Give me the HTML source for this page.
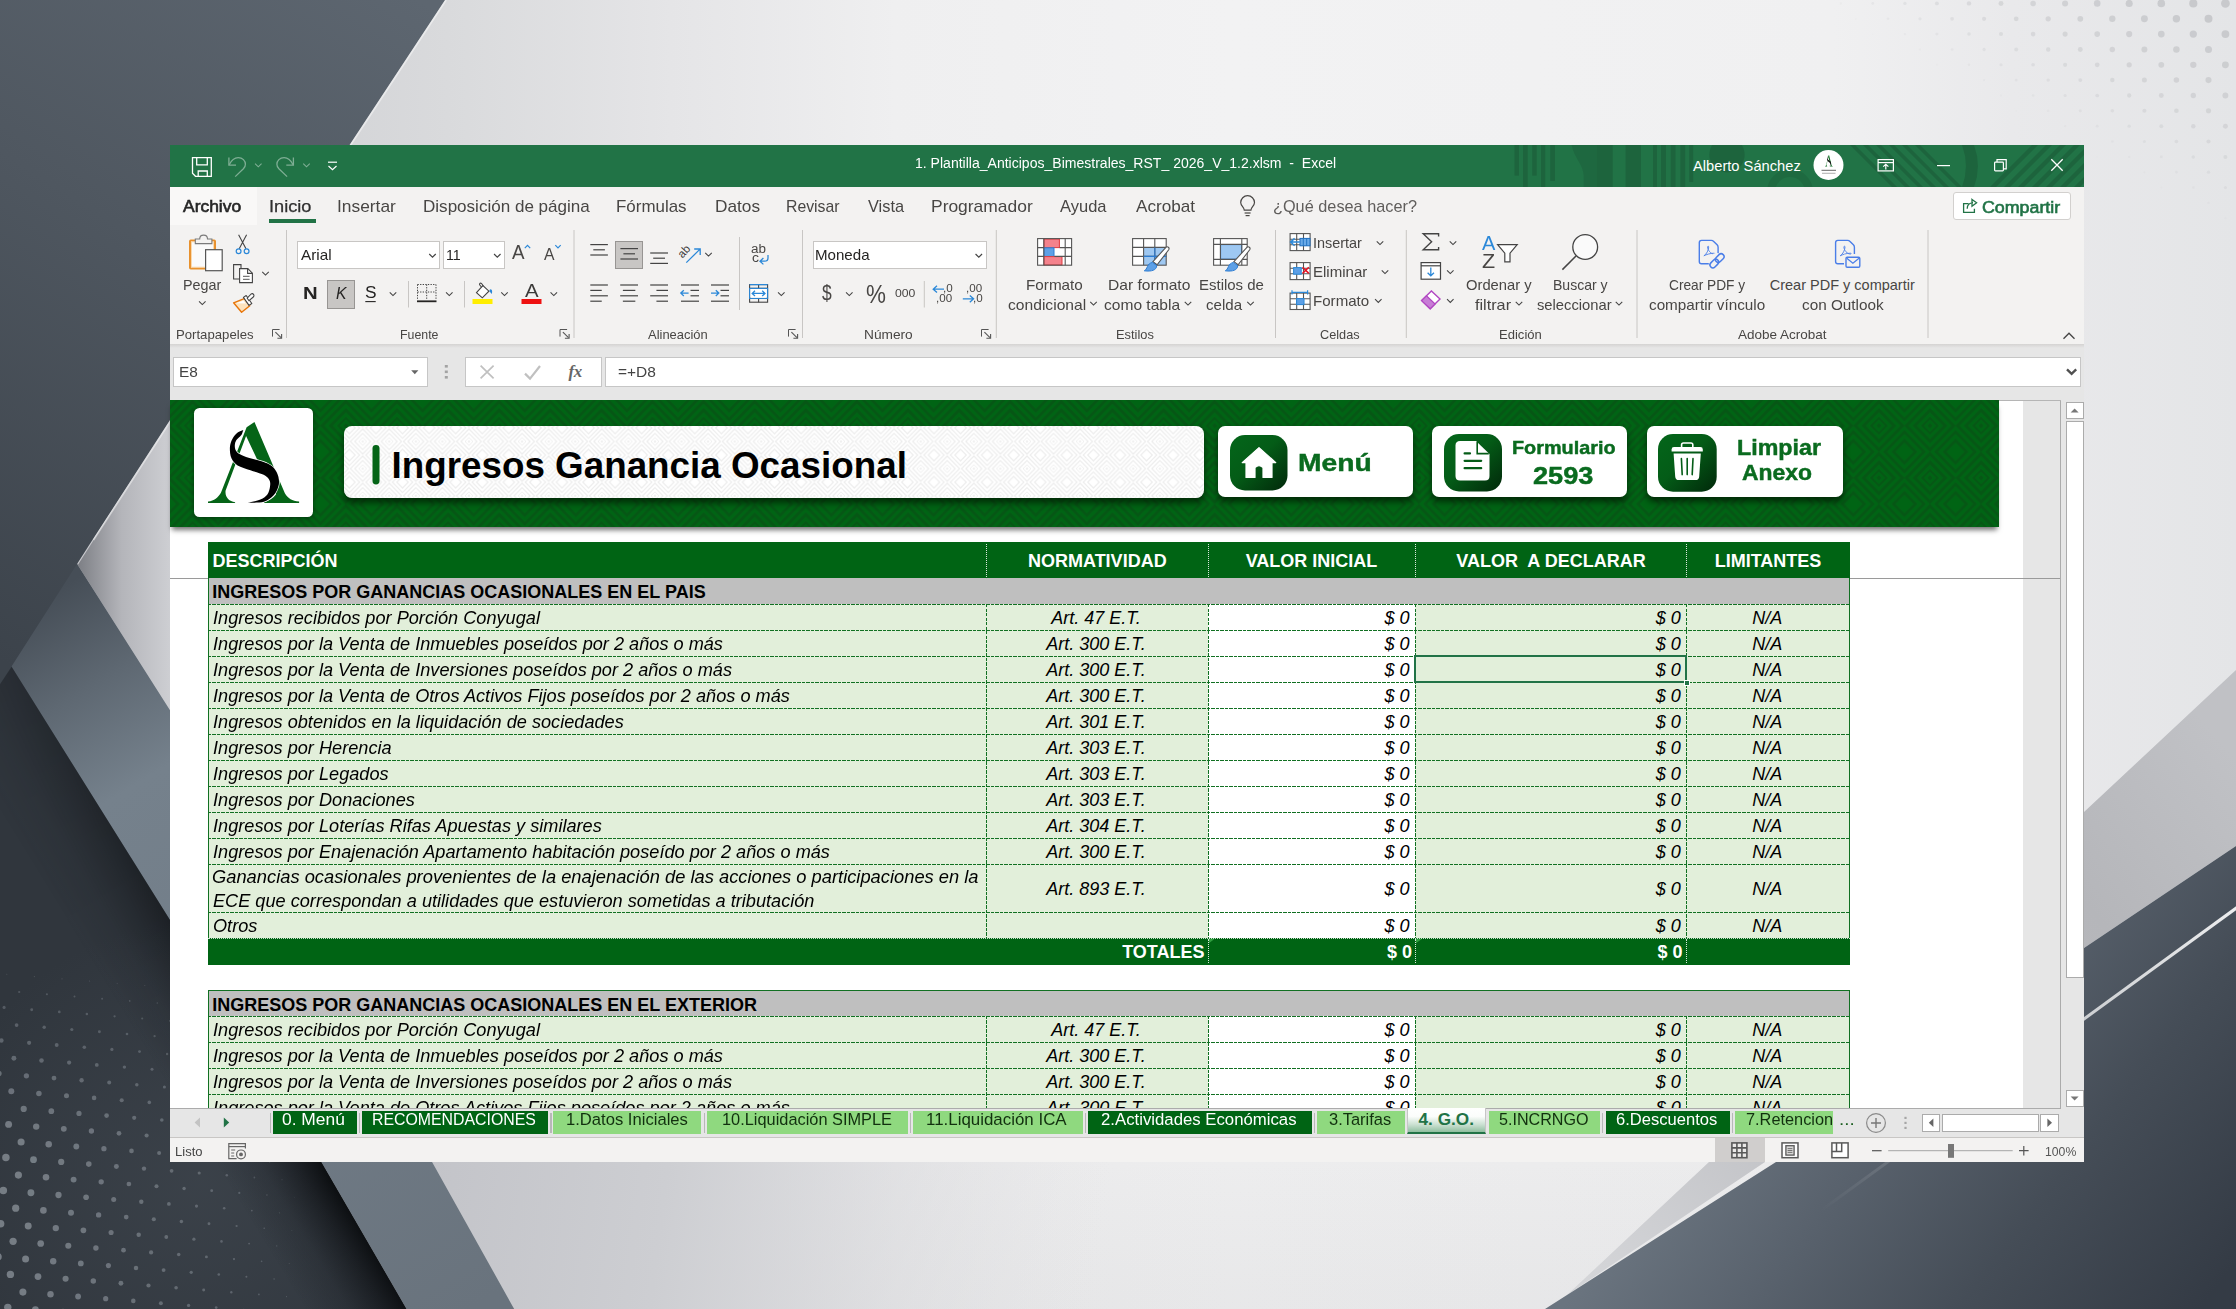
<!DOCTYPE html>
<html><head><meta charset="utf-8"><title>Excel</title>
<style>
html,body{margin:0;padding:0;}
body{width:2236px;height:1309px;overflow:hidden;position:relative;background:#e8e8ea;font-family:"Liberation Sans",sans-serif;}
.a{position:absolute;box-sizing:border-box;}
.t{position:absolute;white-space:pre;transform-origin:0 0;}
svg{overflow:visible;}
</style></head><body>
<svg class="a" style="left:0;top:0" width="2236" height="1309" viewBox="0 0 2236 1309">
<defs>
<linearGradient id="gBase" x1="0" y1="0" x2="2236" y2="0" gradientUnits="userSpaceOnUse">
<stop offset="0" stop-color="#c4c5c9"/><stop offset="0.08" stop-color="#cdced2"/><stop offset="0.2" stop-color="#d9dadc"/><stop offset="0.3" stop-color="#e5e5e7"/><stop offset="0.4" stop-color="#efeff0"/><stop offset="0.55" stop-color="#f2f2f3"/><stop offset="0.82" stop-color="#f0f0f1"/><stop offset="0.9" stop-color="#e9e9eb"/><stop offset="1" stop-color="#e4e5e7"/></linearGradient>
<linearGradient id="gVert" x1="0" y1="0" x2="0" y2="1309" gradientUnits="userSpaceOnUse">
<stop offset="0" stop-color="#000" stop-opacity="0"/><stop offset="0.8" stop-color="#000" stop-opacity="0"/><stop offset="1" stop-color="#20242c" stop-opacity="0.05"/></linearGradient>
<linearGradient id="gP1" x1="420" y1="0" x2="0" y2="660" gradientUnits="userSpaceOnUse">
<stop offset="0" stop-color="#5d6670"/><stop offset="0.45" stop-color="#4f5760"/><stop offset="1" stop-color="#3c434b"/></linearGradient>
<linearGradient id="gTri" x1="78" y1="565" x2="175" y2="565" gradientUnits="userSpaceOnUse">
<stop offset="0" stop-color="#7d7f85"/><stop offset="0.45" stop-color="#b4b5ba"/><stop offset="1" stop-color="#d0d1d5"/></linearGradient>
<linearGradient id="gBand" x1="40" y1="600" x2="470" y2="1309" gradientUnits="userSpaceOnUse">
<stop offset="0" stop-color="#464e57"/><stop offset="0.12" stop-color="#5e6872"/><stop offset="0.25" stop-color="#75818c"/><stop offset="0.6" stop-color="#717c87"/><stop offset="1" stop-color="#69737d"/></linearGradient>
<linearGradient id="gP3" x1="406" y1="1309" x2="286" y2="1378" gradientUnits="userSpaceOnUse">
<stop offset="0" stop-color="#0e1114"/><stop offset="0.25" stop-color="#1c2025"/><stop offset="0.7" stop-color="#2e343c"/><stop offset="1" stop-color="#333941"/></linearGradient>
<radialGradient id="gP3b" cx="200" cy="1180" r="260" gradientUnits="userSpaceOnUse">
<stop offset="0" stop-color="#3f464e" stop-opacity="0.7"/><stop offset="1" stop-color="#414851" stop-opacity="0"/></radialGradient>
<linearGradient id="gLow" x1="430" y1="1162" x2="1100" y2="1250" gradientUnits="userSpaceOnUse">
<stop offset="0" stop-color="#c3c4c9"/><stop offset="0.35" stop-color="#cdced2"/><stop offset="1" stop-color="#e0e0e3" stop-opacity="0"/></linearGradient>
<linearGradient id="gP4" x1="1600" y1="1290" x2="2236" y2="760" gradientUnits="userSpaceOnUse">
<stop offset="0" stop-color="#d4d5d8"/><stop offset="0.35" stop-color="#bebfc3"/><stop offset="0.75" stop-color="#b5b6ba"/><stop offset="1" stop-color="#c0c1c5"/></linearGradient>
<linearGradient id="gP5" x1="1800" y1="1000" x2="2200" y2="1309" gradientUnits="userSpaceOnUse">
<stop offset="0" stop-color="#6a747f"/><stop offset="0.3" stop-color="#58616c"/><stop offset="0.62" stop-color="#454d57"/><stop offset="1" stop-color="#343b45"/></linearGradient>
<linearGradient id="gLine" x1="1820" y1="1210" x2="2236" y2="908" gradientUnits="userSpaceOnUse">
<stop offset="0" stop-color="#fff" stop-opacity="0"/><stop offset="0.2" stop-color="#fff" stop-opacity="0.15"/><stop offset="0.6" stop-color="#fff" stop-opacity="0.7"/><stop offset="1" stop-color="#fff" stop-opacity="0.9"/></linearGradient>
<linearGradient id="gRT" x1="2084" y1="0" x2="2236" y2="0" gradientUnits="userSpaceOnUse">
<stop offset="0" stop-color="#e3e4e6"/><stop offset="1" stop-color="#d6d7da"/></linearGradient>
</defs>
<rect width="2236" height="1309" fill="url(#gBase)"/>
<rect width="2236" height="1309" fill="url(#gVert)"/>
<polygon points="432,1162 1721,1162 1567,1295 1545,1309 514,1309" fill="url(#gLow)"/>
<polygon points="77.8,565 170,420 175,420 175,718" fill="url(#gTri)"/>
<polygon points="0,640 30,640 321.3,1162 406.5,1309 0,1309" fill="#30363d"/>
<polygon points="0,640 30,640 321.3,1162 406.5,1309 0,1309" fill="url(#gP3b)"/>
<polygon points="11.8,667 321.3,1162 406.5,1309 300,1309 0,800 0,684" fill="url(#gP3)" opacity="0.0"/>
<polygon points="70,548 77.8,565 169.7,709.7 432.1,1162 514.2,1309 406.5,1309 321.3,1162 11.8,667 0,650 60,560" fill="url(#gBand)"/>
<polygon points="0,0 445,0 349.5,145 170,420 92.4,540 0,684.5" fill="url(#gP1)"/>
<polyline points="446.2,0 350.7,145 171.2,420 93.6,540" fill="none" stroke="#fff" stroke-opacity="0.45" stroke-width="1.6"/>
<polygon points="2236,670 2084,812 1709,1162 1567,1295 1765,1162 2084,948 2236,846" fill="url(#gP4)"/>
<polygon points="1545,1309 1567,1295 1776,1162 2084,948 2236,846 2236,1309" fill="url(#gP5)"/>
<polygon points="1820,1209.600 2236,906.300 2236,910.200 1821.500,1212" fill="url(#gLine)"/>
<g fill="#c8c9cc"><circle cx="2225.4" cy="3.4" r="4.36" opacity="1.00"/><circle cx="2193.3" cy="3.4" r="4.09" opacity="1.00"/><circle cx="2161.3" cy="3.4" r="3.82" opacity="0.97"/><circle cx="2129.2" cy="3.4" r="3.55" opacity="0.90"/><circle cx="2097.2" cy="3.4" r="3.29" opacity="0.83"/><circle cx="2065.1" cy="3.4" r="3.02" opacity="0.75"/><circle cx="2033.1" cy="3.4" r="2.75" opacity="0.67"/><circle cx="2001.0" cy="3.4" r="2.48" opacity="0.60"/><circle cx="1969.0" cy="3.4" r="2.21" opacity="0.51"/><circle cx="1936.9" cy="3.4" r="1.94" opacity="0.43"/><circle cx="1904.9" cy="3.4" r="1.68" opacity="0.34"/><circle cx="1872.8" cy="3.4" r="1.41" opacity="0.24"/><circle cx="1840.8" cy="3.4" r="1.14" opacity="0.13"/><circle cx="2208.5" cy="18.8" r="3.98" opacity="1.00"/><circle cx="2176.4" cy="18.8" r="3.71" opacity="0.94"/><circle cx="2144.4" cy="18.8" r="3.45" opacity="0.87"/><circle cx="2112.3" cy="18.8" r="3.18" opacity="0.80"/><circle cx="2080.3" cy="18.8" r="2.91" opacity="0.72"/><circle cx="2048.2" cy="18.8" r="2.64" opacity="0.64"/><circle cx="2016.2" cy="18.8" r="2.37" opacity="0.56"/><circle cx="1984.1" cy="18.8" r="2.10" opacity="0.48"/><circle cx="1952.1" cy="18.8" r="1.84" opacity="0.39"/><circle cx="1920.0" cy="18.8" r="1.57" opacity="0.30"/><circle cx="1888.0" cy="18.8" r="1.30" opacity="0.20"/><circle cx="1855.9" cy="18.8" r="1.03" opacity="0.08"/><circle cx="2225.4" cy="34.1" r="3.89" opacity="0.99"/><circle cx="2193.3" cy="34.1" r="3.62" opacity="0.92"/><circle cx="2161.3" cy="34.1" r="3.35" opacity="0.85"/><circle cx="2129.2" cy="34.1" r="3.08" opacity="0.77"/><circle cx="2097.2" cy="34.1" r="2.82" opacity="0.69"/><circle cx="2065.1" cy="34.1" r="2.55" opacity="0.62"/><circle cx="2033.1" cy="34.1" r="2.28" opacity="0.53"/><circle cx="2001.0" cy="34.1" r="2.01" opacity="0.45"/><circle cx="1969.0" cy="34.1" r="1.74" opacity="0.36"/><circle cx="1936.9" cy="34.1" r="1.47" opacity="0.26"/><circle cx="1904.9" cy="34.1" r="1.21" opacity="0.16"/><circle cx="1872.8" cy="34.1" r="0.94" opacity="0.03"/><circle cx="2208.5" cy="49.5" r="3.51" opacity="0.89"/><circle cx="2176.4" cy="49.5" r="3.24" opacity="0.82"/><circle cx="2144.4" cy="49.5" r="2.98" opacity="0.74"/><circle cx="2112.3" cy="49.5" r="2.71" opacity="0.66"/><circle cx="2080.3" cy="49.5" r="2.44" opacity="0.58"/><circle cx="2048.2" cy="49.5" r="2.17" opacity="0.50"/><circle cx="2016.2" cy="49.5" r="1.90" opacity="0.41"/><circle cx="1984.1" cy="49.5" r="1.63" opacity="0.32"/><circle cx="1952.1" cy="49.5" r="1.37" opacity="0.22"/><circle cx="1920.0" cy="49.5" r="1.10" opacity="0.11"/><circle cx="2225.4" cy="64.8" r="3.42" opacity="0.86"/><circle cx="2193.3" cy="64.8" r="3.15" opacity="0.79"/><circle cx="2161.3" cy="64.8" r="2.88" opacity="0.71"/><circle cx="2129.2" cy="64.8" r="2.61" opacity="0.64"/><circle cx="2097.2" cy="64.8" r="2.35" opacity="0.55"/><circle cx="2065.1" cy="64.8" r="2.08" opacity="0.47"/><circle cx="2033.1" cy="64.8" r="1.81" opacity="0.38"/><circle cx="2001.0" cy="64.8" r="1.54" opacity="0.29"/><circle cx="1969.0" cy="64.8" r="1.27" opacity="0.19"/><circle cx="1936.9" cy="64.8" r="1.00" opacity="0.07"/><circle cx="2208.5" cy="80.1" r="3.04" opacity="0.76"/><circle cx="2176.4" cy="80.1" r="2.77" opacity="0.68"/><circle cx="2144.4" cy="80.1" r="2.51" opacity="0.60"/><circle cx="2112.3" cy="80.1" r="2.24" opacity="0.52"/><circle cx="2080.3" cy="80.1" r="1.97" opacity="0.44"/><circle cx="2048.2" cy="80.1" r="1.70" opacity="0.35"/><circle cx="2016.2" cy="80.1" r="1.43" opacity="0.25"/><circle cx="1984.1" cy="80.1" r="1.16" opacity="0.14"/><circle cx="2225.4" cy="95.5" r="2.95" opacity="0.73"/><circle cx="2193.3" cy="95.5" r="2.68" opacity="0.65"/><circle cx="2161.3" cy="95.5" r="2.41" opacity="0.57"/><circle cx="2129.2" cy="95.5" r="2.14" opacity="0.49"/><circle cx="2097.2" cy="95.5" r="1.87" opacity="0.40"/><circle cx="2065.1" cy="95.5" r="1.61" opacity="0.31"/><circle cx="2033.1" cy="95.5" r="1.34" opacity="0.21"/><circle cx="2001.0" cy="95.5" r="1.07" opacity="0.10"/><circle cx="2208.5" cy="110.8" r="2.57" opacity="0.62"/><circle cx="2176.4" cy="110.8" r="2.30" opacity="0.54"/><circle cx="2144.4" cy="110.8" r="2.03" opacity="0.46"/><circle cx="2112.3" cy="110.8" r="1.77" opacity="0.37"/><circle cx="2080.3" cy="110.8" r="1.50" opacity="0.27"/><circle cx="2048.2" cy="110.8" r="1.23" opacity="0.17"/><circle cx="2016.2" cy="110.8" r="0.96" opacity="0.04"/><circle cx="2225.4" cy="126.2" r="2.48" opacity="0.59"/><circle cx="2193.3" cy="126.2" r="2.21" opacity="0.51"/><circle cx="2161.3" cy="126.2" r="1.94" opacity="0.43"/><circle cx="2129.2" cy="126.2" r="1.67" opacity="0.34"/><circle cx="2097.2" cy="126.2" r="1.40" opacity="0.24"/><circle cx="2065.1" cy="126.2" r="1.14" opacity="0.13"/><circle cx="2208.5" cy="141.5" r="2.10" opacity="0.48"/><circle cx="2176.4" cy="141.5" r="1.83" opacity="0.39"/><circle cx="2144.4" cy="141.5" r="1.56" opacity="0.30"/><circle cx="2112.3" cy="141.5" r="1.30" opacity="0.20"/><circle cx="2080.3" cy="141.5" r="1.03" opacity="0.08"/><circle cx="2225.4" cy="156.9" r="2.01" opacity="0.45"/><circle cx="2193.3" cy="156.9" r="1.74" opacity="0.36"/><circle cx="2161.3" cy="156.9" r="1.47" opacity="0.26"/><circle cx="2129.2" cy="156.9" r="1.20" opacity="0.16"/><circle cx="2097.2" cy="156.9" r="0.93" opacity="0.03"/><circle cx="2208.5" cy="172.2" r="1.63" opacity="0.32"/><circle cx="2176.4" cy="172.2" r="1.36" opacity="0.22"/><circle cx="2144.4" cy="172.2" r="1.09" opacity="0.11"/><circle cx="2225.4" cy="187.6" r="1.54" opacity="0.29"/><circle cx="2193.3" cy="187.6" r="1.27" opacity="0.19"/><circle cx="2161.3" cy="187.6" r="1.00" opacity="0.07"/><circle cx="2208.5" cy="202.9" r="1.16" opacity="0.14"/><circle cx="2225.4" cy="218.3" r="1.07" opacity="0.10"/></g>
<defs><filter id="fdot" x="-5%" y="-5%" width="110%" height="110%"><feGaussianBlur stdDeviation="0.55"/></filter></defs>
<g fill="#7d848c" filter="url(#fdot)"><circle cx="6.8" cy="974.3" r="0.51" opacity="0.37"/><circle cx="34.4" cy="976.6" r="0.56" opacity="0.38"/><circle cx="62.0" cy="978.8" r="0.58" opacity="0.38"/><circle cx="89.6" cy="981.0" r="0.59" opacity="0.38"/><circle cx="117.2" cy="983.2" r="0.57" opacity="0.38"/><circle cx="144.8" cy="985.5" r="0.54" opacity="0.38"/><circle cx="172.4" cy="987.7" r="0.50" opacity="0.38"/><circle cx="19.2" cy="992.0" r="1.09" opacity="0.43"/><circle cx="46.9" cy="994.2" r="1.05" opacity="0.43"/><circle cx="74.5" cy="996.4" r="0.99" opacity="0.43"/><circle cx="102.1" cy="998.7" r="0.93" opacity="0.42"/><circle cx="129.7" cy="1000.9" r="0.85" opacity="0.42"/><circle cx="157.3" cy="1003.1" r="0.77" opacity="0.41"/><circle cx="184.9" cy="1005.3" r="0.67" opacity="0.41"/><circle cx="4.1" cy="1007.4" r="1.54" opacity="0.48"/><circle cx="31.7" cy="1009.7" r="1.45" opacity="0.48"/><circle cx="59.3" cy="1011.9" r="1.36" opacity="0.47"/><circle cx="86.9" cy="1014.1" r="1.26" opacity="0.47"/><circle cx="114.6" cy="1016.3" r="1.16" opacity="0.46"/><circle cx="142.2" cy="1018.5" r="1.04" opacity="0.45"/><circle cx="169.8" cy="1020.8" r="0.91" opacity="0.44"/><circle cx="197.4" cy="1023.0" r="0.78" opacity="0.43"/><circle cx="16.6" cy="1025.1" r="1.84" opacity="0.54"/><circle cx="44.2" cy="1027.3" r="1.72" opacity="0.53"/><circle cx="71.8" cy="1029.5" r="1.59" opacity="0.52"/><circle cx="99.4" cy="1031.8" r="1.46" opacity="0.50"/><circle cx="127.0" cy="1034.0" r="1.31" opacity="0.49"/><circle cx="154.6" cy="1036.2" r="1.16" opacity="0.48"/><circle cx="182.2" cy="1038.4" r="1.00" opacity="0.46"/><circle cx="209.9" cy="1040.6" r="0.84" opacity="0.44"/><circle cx="1.4" cy="1040.5" r="2.23" opacity="0.60"/><circle cx="29.1" cy="1042.8" r="2.08" opacity="0.58"/><circle cx="56.7" cy="1045.0" r="1.93" opacity="0.57"/><circle cx="84.3" cy="1047.2" r="1.77" opacity="0.55"/><circle cx="111.9" cy="1049.4" r="1.60" opacity="0.54"/><circle cx="139.5" cy="1051.6" r="1.42" opacity="0.52"/><circle cx="167.1" cy="1053.9" r="1.24" opacity="0.50"/><circle cx="194.7" cy="1056.1" r="1.05" opacity="0.48"/><circle cx="222.3" cy="1058.3" r="0.86" opacity="0.45"/><circle cx="13.9" cy="1058.2" r="2.45" opacity="0.65"/><circle cx="41.5" cy="1060.4" r="2.27" opacity="0.63"/><circle cx="69.1" cy="1062.6" r="2.09" opacity="0.61"/><circle cx="96.8" cy="1064.9" r="1.89" opacity="0.59"/><circle cx="124.4" cy="1067.1" r="1.70" opacity="0.56"/><circle cx="152.0" cy="1069.3" r="1.50" opacity="0.54"/><circle cx="179.6" cy="1071.5" r="1.29" opacity="0.51"/><circle cx="207.2" cy="1073.7" r="1.07" opacity="0.49"/><circle cx="234.8" cy="1076.0" r="0.85" opacity="0.46"/><circle cx="-1.2" cy="1073.6" r="2.82" opacity="0.71"/><circle cx="26.4" cy="1075.8" r="2.62" opacity="0.69"/><circle cx="54.0" cy="1078.1" r="2.41" opacity="0.67"/><circle cx="81.6" cy="1080.3" r="2.20" opacity="0.64"/><circle cx="109.2" cy="1082.5" r="1.99" opacity="0.61"/><circle cx="136.8" cy="1084.7" r="1.76" opacity="0.59"/><circle cx="164.4" cy="1087.0" r="1.53" opacity="0.56"/><circle cx="192.1" cy="1089.2" r="1.30" opacity="0.53"/><circle cx="219.7" cy="1091.4" r="1.06" opacity="0.50"/><circle cx="247.3" cy="1093.6" r="0.82" opacity="0.46"/><circle cx="11.3" cy="1091.3" r="2.98" opacity="0.76"/><circle cx="38.9" cy="1093.5" r="2.75" opacity="0.73"/><circle cx="66.5" cy="1095.7" r="2.52" opacity="0.70"/><circle cx="94.1" cy="1097.9" r="2.29" opacity="0.67"/><circle cx="121.7" cy="1100.2" r="2.04" opacity="0.64"/><circle cx="149.3" cy="1102.4" r="1.80" opacity="0.61"/><circle cx="176.9" cy="1104.6" r="1.55" opacity="0.57"/><circle cx="204.5" cy="1106.8" r="1.29" opacity="0.54"/><circle cx="232.1" cy="1109.1" r="1.03" opacity="0.50"/><circle cx="259.8" cy="1111.3" r="0.76" opacity="0.46"/><circle cx="-3.9" cy="1106.7" r="3.34" opacity="0.83"/><circle cx="23.7" cy="1108.9" r="3.10" opacity="0.80"/><circle cx="51.3" cy="1111.2" r="2.85" opacity="0.77"/><circle cx="79.0" cy="1113.4" r="2.60" opacity="0.73"/><circle cx="106.6" cy="1115.6" r="2.34" opacity="0.70"/><circle cx="134.2" cy="1117.8" r="2.08" opacity="0.66"/><circle cx="161.8" cy="1120.0" r="1.81" opacity="0.62"/><circle cx="189.4" cy="1122.3" r="1.53" opacity="0.58"/><circle cx="217.0" cy="1124.5" r="1.25" opacity="0.54"/><circle cx="244.6" cy="1126.7" r="0.97" opacity="0.50"/><circle cx="272.2" cy="1128.9" r="0.68" opacity="0.45"/><circle cx="8.6" cy="1124.4" r="3.46" opacity="0.87"/><circle cx="36.2" cy="1126.6" r="3.19" opacity="0.83"/><circle cx="63.8" cy="1128.8" r="2.92" opacity="0.80"/><circle cx="91.4" cy="1131.0" r="2.65" opacity="0.76"/><circle cx="119.0" cy="1133.3" r="2.37" opacity="0.72"/><circle cx="146.6" cy="1135.5" r="2.08" opacity="0.67"/><circle cx="174.3" cy="1137.7" r="1.79" opacity="0.63"/><circle cx="201.9" cy="1139.9" r="1.49" opacity="0.58"/><circle cx="229.5" cy="1142.1" r="1.19" opacity="0.54"/><circle cx="257.1" cy="1144.4" r="0.88" opacity="0.49"/><circle cx="21.1" cy="1142.0" r="3.55" opacity="0.90"/><circle cx="48.7" cy="1144.3" r="3.25" opacity="0.86"/><circle cx="76.3" cy="1146.5" r="2.93" opacity="0.81"/><circle cx="103.9" cy="1148.7" r="2.62" opacity="0.76"/><circle cx="131.5" cy="1150.9" r="2.31" opacity="0.71"/><circle cx="159.1" cy="1153.1" r="2.00" opacity="0.67"/><circle cx="186.7" cy="1155.4" r="1.68" opacity="0.62"/><circle cx="214.3" cy="1157.6" r="1.37" opacity="0.57"/><circle cx="242.0" cy="1159.8" r="1.06" opacity="0.52"/><circle cx="269.6" cy="1162.0" r="0.74" opacity="0.47"/><circle cx="5.9" cy="1157.5" r="3.73" opacity="0.90"/><circle cx="33.5" cy="1159.7" r="3.42" opacity="0.89"/><circle cx="61.2" cy="1161.9" r="3.11" opacity="0.84"/><circle cx="88.8" cy="1164.1" r="2.79" opacity="0.79"/><circle cx="116.4" cy="1166.4" r="2.48" opacity="0.74"/><circle cx="144.0" cy="1168.6" r="2.17" opacity="0.69"/><circle cx="171.6" cy="1170.8" r="1.85" opacity="0.64"/><circle cx="199.2" cy="1173.0" r="1.54" opacity="0.59"/><circle cx="226.8" cy="1175.2" r="1.23" opacity="0.54"/><circle cx="254.4" cy="1177.5" r="0.91" opacity="0.49"/><circle cx="282.0" cy="1179.7" r="0.60" opacity="0.44"/><circle cx="18.4" cy="1175.1" r="3.59" opacity="0.90"/><circle cx="46.0" cy="1177.3" r="3.28" opacity="0.87"/><circle cx="73.6" cy="1179.6" r="2.96" opacity="0.82"/><circle cx="101.2" cy="1181.8" r="2.65" opacity="0.77"/><circle cx="128.9" cy="1184.0" r="2.34" opacity="0.72"/><circle cx="156.5" cy="1186.2" r="2.03" opacity="0.67"/><circle cx="184.1" cy="1188.5" r="1.71" opacity="0.62"/><circle cx="211.7" cy="1190.7" r="1.40" opacity="0.57"/><circle cx="239.3" cy="1192.9" r="1.09" opacity="0.52"/><circle cx="266.9" cy="1195.1" r="0.77" opacity="0.47"/><circle cx="294.5" cy="1197.3" r="0.46" opacity="0.42"/><circle cx="3.3" cy="1190.6" r="3.76" opacity="0.90"/><circle cx="30.9" cy="1192.8" r="3.45" opacity="0.89"/><circle cx="58.5" cy="1195.0" r="3.14" opacity="0.85"/><circle cx="86.1" cy="1197.2" r="2.82" opacity="0.80"/><circle cx="113.7" cy="1199.4" r="2.51" opacity="0.75"/><circle cx="141.3" cy="1201.7" r="2.20" opacity="0.70"/><circle cx="168.9" cy="1203.9" r="1.88" opacity="0.65"/><circle cx="196.5" cy="1206.1" r="1.57" opacity="0.60"/><circle cx="224.2" cy="1208.3" r="1.26" opacity="0.55"/><circle cx="251.8" cy="1210.6" r="0.94" opacity="0.50"/><circle cx="279.4" cy="1212.8" r="0.63" opacity="0.45"/><circle cx="15.7" cy="1208.2" r="3.62" opacity="0.90"/><circle cx="43.4" cy="1210.4" r="3.31" opacity="0.87"/><circle cx="71.0" cy="1212.7" r="3.00" opacity="0.82"/><circle cx="98.6" cy="1214.9" r="2.68" opacity="0.77"/><circle cx="126.2" cy="1217.1" r="2.37" opacity="0.72"/><circle cx="153.8" cy="1219.3" r="2.06" opacity="0.67"/><circle cx="181.4" cy="1221.5" r="1.74" opacity="0.63"/><circle cx="209.0" cy="1223.8" r="1.43" opacity="0.58"/><circle cx="236.6" cy="1226.0" r="1.12" opacity="0.53"/><circle cx="264.2" cy="1228.2" r="0.80" opacity="0.48"/><circle cx="291.9" cy="1230.4" r="0.49" opacity="0.43"/><circle cx="0.6" cy="1223.7" r="3.79" opacity="0.90"/><circle cx="28.2" cy="1225.9" r="3.48" opacity="0.90"/><circle cx="55.8" cy="1228.1" r="3.17" opacity="0.85"/><circle cx="83.4" cy="1230.3" r="2.85" opacity="0.80"/><circle cx="111.1" cy="1232.5" r="2.54" opacity="0.75"/><circle cx="138.7" cy="1234.8" r="2.23" opacity="0.70"/><circle cx="166.3" cy="1237.0" r="1.91" opacity="0.65"/><circle cx="193.9" cy="1239.2" r="1.60" opacity="0.60"/><circle cx="221.5" cy="1241.4" r="1.29" opacity="0.55"/><circle cx="249.1" cy="1243.6" r="0.97" opacity="0.50"/><circle cx="276.7" cy="1245.9" r="0.66" opacity="0.45"/><circle cx="13.1" cy="1241.3" r="3.65" opacity="0.90"/><circle cx="40.7" cy="1243.5" r="3.34" opacity="0.88"/><circle cx="68.3" cy="1245.8" r="3.03" opacity="0.83"/><circle cx="95.9" cy="1248.0" r="2.71" opacity="0.78"/><circle cx="123.5" cy="1250.2" r="2.40" opacity="0.73"/><circle cx="151.1" cy="1252.4" r="2.09" opacity="0.68"/><circle cx="178.7" cy="1254.6" r="1.77" opacity="0.63"/><circle cx="206.4" cy="1256.9" r="1.46" opacity="0.58"/><circle cx="234.0" cy="1259.1" r="1.15" opacity="0.53"/><circle cx="261.6" cy="1261.3" r="0.83" opacity="0.48"/><circle cx="289.2" cy="1263.5" r="0.52" opacity="0.43"/><circle cx="-2.1" cy="1256.7" r="3.82" opacity="0.90"/><circle cx="25.6" cy="1259.0" r="3.51" opacity="0.90"/><circle cx="53.2" cy="1261.2" r="3.20" opacity="0.85"/><circle cx="80.8" cy="1263.4" r="2.88" opacity="0.81"/><circle cx="108.4" cy="1265.6" r="2.57" opacity="0.76"/><circle cx="136.0" cy="1267.9" r="2.26" opacity="0.71"/><circle cx="163.6" cy="1270.1" r="1.94" opacity="0.66"/><circle cx="191.2" cy="1272.3" r="1.63" opacity="0.61"/><circle cx="218.8" cy="1274.5" r="1.32" opacity="0.56"/><circle cx="246.4" cy="1276.7" r="1.00" opacity="0.51"/><circle cx="274.1" cy="1279.0" r="0.69" opacity="0.46"/><circle cx="10.4" cy="1274.4" r="3.68" opacity="0.90"/><circle cx="38.0" cy="1276.6" r="3.37" opacity="0.88"/><circle cx="65.6" cy="1278.8" r="3.06" opacity="0.83"/><circle cx="93.3" cy="1281.1" r="2.74" opacity="0.78"/><circle cx="120.9" cy="1283.3" r="2.43" opacity="0.73"/><circle cx="148.5" cy="1285.5" r="2.12" opacity="0.68"/><circle cx="176.1" cy="1287.7" r="1.80" opacity="0.63"/><circle cx="203.7" cy="1290.0" r="1.49" opacity="0.59"/><circle cx="231.3" cy="1292.2" r="1.18" opacity="0.54"/><circle cx="258.9" cy="1294.4" r="0.86" opacity="0.49"/><circle cx="286.5" cy="1296.6" r="0.55" opacity="0.44"/><circle cx="-4.7" cy="1289.8" r="3.85" opacity="0.90"/><circle cx="22.9" cy="1292.1" r="3.54" opacity="0.90"/><circle cx="50.5" cy="1294.3" r="3.23" opacity="0.86"/><circle cx="78.1" cy="1296.5" r="2.91" opacity="0.81"/><circle cx="105.7" cy="1298.7" r="2.60" opacity="0.76"/><circle cx="133.3" cy="1300.9" r="2.29" opacity="0.71"/><circle cx="160.9" cy="1303.2" r="1.97" opacity="0.66"/><circle cx="188.6" cy="1305.4" r="1.66" opacity="0.61"/><circle cx="216.2" cy="1307.6" r="1.35" opacity="0.56"/><circle cx="243.8" cy="1309.8" r="1.03" opacity="0.51"/><circle cx="271.4" cy="1312.1" r="0.72" opacity="0.46"/><circle cx="7.8" cy="1307.5" r="3.71" opacity="0.90"/><circle cx="35.4" cy="1309.7" r="3.40" opacity="0.89"/><circle cx="63.0" cy="1311.9" r="3.09" opacity="0.84"/><circle cx="90.6" cy="1314.2" r="2.77" opacity="0.79"/></g>
<defs><linearGradient id="gSh" x1="321.3" y1="1162" x2="244.6" y2="1209.1" gradientUnits="userSpaceOnUse"><stop offset="0" stop-color="#07090b" stop-opacity="0.9"/><stop offset="0.25" stop-color="#0b0d10" stop-opacity="0.6"/><stop offset="0.6" stop-color="#101317" stop-opacity="0.22"/><stop offset="1" stop-color="#101317" stop-opacity="0"/></linearGradient><linearGradient id="gAl" x1="11.8" y1="667" x2="406.5" y2="1309" gradientUnits="userSpaceOnUse"><stop offset="0" stop-color="#fff" stop-opacity="0.25"/><stop offset="0.45" stop-color="#fff" stop-opacity="0.6"/><stop offset="0.8" stop-color="#fff" stop-opacity="1"/></linearGradient><mask id="mSh" maskUnits="userSpaceOnUse" x="-10" y="600" width="460" height="720"><rect x="-10" y="600" width="460" height="720" fill="url(#gAl)"/></mask></defs>
<polygon points="0,684 11.8,667 321.3,1162 406.5,1309 0,1309" fill="url(#gSh)" mask="url(#mSh)"/>
</svg>
<div class="a" style="left:170.00px;top:145.00px;width:1914.00px;height:1017.00px;background:#f3f2f1;"></div>
<div class="a" style="left:170.00px;top:145.00px;width:1914.00px;height:42.00px;background:#217346;"></div>
<svg class="a" style="left:0.00px;top:0.00px;" width="2236" height="1309" viewBox="0 0 2236 1309"><g fill="#1d633d" opacity="0.9"><clipPath id="tbc"><rect x="170" y="145" width="1914" height="42"/></clipPath><g clip-path="url(#tbc)"><rect x="1514.5" y="145" width="4.5" height="30.6"/><rect x="1523" y="145" width="4.7" height="42.0"/><rect x="1532.2" y="145" width="4.5" height="30.6"/><rect x="1541" y="145" width="4.3" height="42.0"/><rect x="1550.2" y="145" width="4.8" height="36.0"/><rect x="1596.6" y="145" width="16.1" height="42.0"/><rect x="1625.6" y="145" width="15.4" height="42.0"/><rect x="1653" y="145" width="4.0" height="42.0"/><rect x="1661" y="145" width="5.0" height="42.0"/><rect x="1670.7" y="145" width="4.8" height="42.0"/><rect x="1680.4" y="145" width="4.8" height="42.0"/><rect x="1689.2" y="145" width="4.0" height="37.0"/><path d="M1571.6,145 H1596.6 V187 H1583.700 V176 C1583.700,165 1574,158 1571.600,145 Z" opacity="0.75"/><circle cx="1727" cy="154.700" r="17.700"/><circle cx="1790" cy="192" r="19" fill="none" stroke="#1e6a40" stroke-width="8"/><path d="M1962,145 h12 a60,60 0 0 1 0,42 h-12 a60,60 0 0 0 0,-42z"/><path d="M1850,145 l5,0 l42,42 l-5,0 z"/><path d="M1863,145 l5,0 l42,42 l-5,0 z"/><path d="M1876,145 l5,0 l42,42 l-5,0 z"/><path d="M1889,145 l5,0 l42,42 l-5,0 z"/><path d="M1902,145 l5,0 l42,42 l-5,0 z"/><path d="M1915,145 l5,0 l42,42 l-5,0 z"/><path d="M2032,145 l6,0 l-42,42 l-6,0 z"/><path d="M2046,145 l6,0 l-42,42 l-6,0 z"/><path d="M2060,145 l6,0 l-42,42 l-6,0 z"/><path d="M2074,145 l6,0 l-42,42 l-6,0 z"/><path d="M2088,145 l6,0 l-42,42 l-6,0 z"/><path d="M2102,145 l6,0 l-42,42 l-6,0 z"/><path d="M2116,145 l6,0 l-42,42 l-6,0 z"/></g></g><g fill="none" stroke="#fff" stroke-width="1.3"><path d="M192.5,157.700 H211.300 V176.300 H195.500 L192.500,173.300 Z"/><path d="M196.700,157.700 V164.800 H207.300 V157.700"/><path d="M198.200,176.300 V171 H207.300 V176.300"/></g><g fill="none" stroke="#fff" stroke-width="1.3" opacity="0.42"><path d="M228.900,157.500 V165.200 H236"/><path d="M229.200,164.800 C231.500,160 234.500,157.600 238.200,157.600 C242.600,157.600 245.400,160.800 245.400,164.200 C245.400,166.200 244.600,167.600 243.400,168.800 L235.200,176.600"/><path d="M293.400,157.500 V165.200 H286.300"/><path d="M293.100,164.800 C290.800,160 287.800,157.600 284.100,157.600 C279.700,157.600 276.900,160.800 276.900,164.200 C276.900,166.200 277.700,167.600 278.900,168.800 L287.100,176.600"/></g><g opacity="0.42"><polyline points="255.05,163.60 258.30,166.80 261.55,163.60" fill="none" stroke="#fff" stroke-width="1.1"/><polyline points="303.25,163.60 306.50,166.80 309.75,163.60" fill="none" stroke="#fff" stroke-width="1.1"/></g><line x1="328" y1="162.200" x2="337" y2="162.200" stroke="#fff" stroke-width="1.2"/><polyline points="328.50,166.00 332.50,169.60 336.50,166.00" fill="none" stroke="#fff" stroke-width="1.2"/><circle cx="1828.5" cy="165" r="15" fill="#fff"/><g transform="translate(1823.6,152.500) scale(0.0076,0.0128)"><path d="M715,200 L628,258 L343,985 C310,1040 270,1075 200,1082 L200,1097 L500,1097 L500,1090 C430,1080 385,1030 395,960 L622,355 L780,690 L905,800 L955,1000 C925,1045 870,1075 820,1088 L820,1097 L1210,1097 L1210,1082 C1130,1076 1090,1050 1052,990 Z" fill="#0a6b1f"/><path d="M591,289 C513,329 442,420 442,497 C442,602 528,681 670,734 C817,786 888,850 888,910 C885,1000 780,1060 640,1096 C820,1085 980,1000 986,843 C980,720 860,660 754,623 C600,580 507,540 497,455 C500,400 560,350 591,289 Z" fill="#111"/></g><g fill="#333"><rect x="1821.500" y="169.800" width="14.500" height="1" opacity="0.75"/><rect x="1822" y="172.800" width="13.500" height="0.9" opacity="0.45"/></g><g fill="none" stroke="#fff" stroke-width="1.2"><rect x="1878.1" y="159.6" width="15.3" height="11.3"/><line x1="1878" y1="162.6" x2="1893.5" y2="162.6"/><path d="M1885.8,169.5 v-5 M1883.2,166.6 l2.6,-2.4 l2.6,2.4"/></g><line x1="1937" y1="165.6" x2="1950" y2="165.6" stroke="#fff" stroke-width="1.2"/><g fill="none" stroke="#fff" stroke-width="1.2"><rect x="1994.6" y="162.1" width="8.8" height="8.8" rx="0.8"/><path d="M1997,162 v-2.3 h9.2 v9.2 h-2.6"/></g><path d="M2051.3,159.3 L2062.7,170.7 M2062.7,159.3 L2051.3,170.7" stroke="#fff" stroke-width="1.3" fill="none"/></svg>
<span class="t" style="left:914.93px;top:156.36px;font-size:14.7px;line-height:14.7px;color:#fff;transform:scaleX(0.9553);">1. Plantilla_Anticipos_Bimestrales_RST_ 2026_V_1.2.xlsm  -  Excel</span>
<span class="t" style="left:1693.00px;top:158.56px;font-size:14.7px;line-height:14.7px;color:#fff;">Alberto Sánchez</span>
<div class="a" style="left:170.00px;top:187.00px;width:87.00px;height:37.50px;background:#f9f8f7;"></div>
<span class="t" style="left:183.00px;top:198.49px;font-size:16.2px;line-height:16.2px;color:#262626;transform:scaleX(1.0773);-webkit-text-stroke:0.6px #262626;">Archivo</span>
<span class="t" style="left:269.32px;top:198.49px;font-size:16.2px;line-height:16.2px;color:#2f2f2f;transform:scaleX(1.1228);-webkit-text-stroke:0.25px #333;">Inicio</span>
<div class="a" style="left:269.00px;top:219.30px;width:46.50px;height:3.30px;background:#217346;"></div>
<span class="t" style="left:337.39px;top:198.49px;font-size:16.2px;line-height:16.2px;color:#484644;transform:scaleX(1.0729);">Insertar</span>
<span class="t" style="left:422.55px;top:198.49px;font-size:16.2px;line-height:16.2px;color:#484644;transform:scaleX(1.0533);">Disposición de página</span>
<span class="t" style="left:616.06px;top:198.49px;font-size:16.2px;line-height:16.2px;color:#484644;transform:scaleX(1.0458);">Fórmulas</span>
<span class="t" style="left:714.54px;top:198.49px;font-size:16.2px;line-height:16.2px;color:#484644;transform:scaleX(1.0650);">Datos</span>
<span class="t" style="left:785.66px;top:198.49px;font-size:16.2px;line-height:16.2px;color:#484644;transform:scaleX(0.9765);">Revisar</span>
<span class="t" style="left:867.87px;top:198.49px;font-size:16.2px;line-height:16.2px;color:#484644;transform:scaleX(1.0105);">Vista</span>
<span class="t" style="left:930.52px;top:198.49px;font-size:16.2px;line-height:16.2px;color:#484644;transform:scaleX(1.0767);">Programador</span>
<span class="t" style="left:1059.50px;top:198.49px;font-size:16.2px;line-height:16.2px;color:#484644;transform:scaleX(1.0192);">Ayuda</span>
<span class="t" style="left:1135.50px;top:198.49px;font-size:16.2px;line-height:16.2px;color:#484644;transform:scaleX(1.0583);">Acrobat</span>
<span class="t" style="left:1273.49px;top:198.49px;font-size:16.2px;line-height:16.2px;color:#605e5c;transform:scaleX(1.0062);">¿Qué desea hacer?</span>
<div class="a" style="left:1953.00px;top:192.00px;width:117.50px;height:28.00px;background:#fff;border:1px solid #d2d0ce;border-radius:3px;"></div>
<svg class="a" style="left:0.00px;top:0.00px;" width="2236" height="1309" viewBox="0 0 2236 1309"><g fill="none" stroke="#484644" stroke-width="1.2"><path d="M1244.3,210.2 c0,-3 -3.6,-4.2 -3.6,-7.6 a6.9,6.9 0 0 1 13.8,0 c0,3.4 -3.6,4.6 -3.6,7.6 z"/><line x1="1244.6" y1="213" x2="1250.6" y2="213"/><line x1="1245.6" y1="215.6" x2="1249.6" y2="215.6"/></g><g fill="none" stroke="#217346" stroke-width="1.3"><path d="M1968.600,203.600 H1963.600 V212.400 H1974.400 V208.800"/><path d="M1967.200,208.800 C1967.200,204.800 1969.800,202.800 1973,202.800 M1972,199.400 L1976.600,202.800 L1972,206.200 Z"/></g></svg>
<span class="t" style="left:1982.04px;top:198.69px;font-size:16.2px;line-height:16.2px;color:#217346;transform:scaleX(1.1000);-webkit-text-stroke:0.6px #217346;">Compartir</span>
<span class="t" style="left:182.89px;top:277.73px;font-size:14.5px;line-height:14.5px;color:#484644;transform:scaleX(0.9900);">Pegar</span>
<span class="t" style="left:175.91px;top:328.86px;font-size:12.1px;line-height:12.1px;color:#484644;transform:scaleX(1.0877);">Portapapeles</span>
<div class="a" style="left:297.00px;top:240.50px;width:143.00px;height:28.30px;background:#fff;border:1px solid #c8c6c4;"></div>
<span class="t" style="left:300.50px;top:247.93px;font-size:14.5px;line-height:14.5px;color:#252423;transform:scaleX(1.0536);">Arial</span>
<div class="a" style="left:443.00px;top:240.50px;width:62.00px;height:28.30px;background:#fff;border:1px solid #c8c6c4;"></div>
<span class="t" style="left:445.90px;top:247.93px;font-size:14.5px;line-height:14.5px;color:#252423;transform:scaleX(0.9811);">11</span>
<span class="t" style="left:512.00px;top:243.49px;font-size:19.5px;line-height:19.5px;color:#484644;transform:scaleX(0.9615);">A</span>
<span class="t" style="left:544.00px;top:246.03px;font-size:16.5px;line-height:16.5px;color:#484644;transform:scaleX(0.9545);">A</span>
<span class="t" style="left:302.62px;top:285.03px;font-size:16.5px;line-height:16.5px;color:#252423;font-weight:bold;transform:scaleX(1.2308);">N</span>
<div class="a" style="left:327.00px;top:280.30px;width:27.50px;height:28.40px;background:#c8c6c4;border:1px solid #979593;"></div>
<span class="t" style="left:335.52px;top:285.33px;font-size:16.5px;line-height:16.5px;color:#252423;font-style:italic;transform:scaleX(0.9545);">K</span>
<span class="t" style="left:364.69px;top:284.76px;font-size:16px;line-height:16px;color:#252423;transform:scaleX(1.0811);">S</span>
<span class="t" style="left:524.50px;top:281.64px;font-size:18.5px;line-height:18.5px;color:#3b3a39;transform:scaleX(1.1020);">A</span>
<span class="t" style="left:399.98px;top:328.86px;font-size:12.1px;line-height:12.1px;color:#484644;transform:scaleX(1.0207);">Fuente</span>
<div class="a" style="left:615.10px;top:240.50px;width:27.90px;height:28.30px;background:#c8c6c4;border:1px solid #979593;"></div>
<span class="t" style="left:680.45px;top:244.77px;font-size:11.5px;line-height:11.5px;color:#3b3a39;transform:scaleX(1.1064);transform:rotate(-48deg);transform-origin:50% 75%;">ab</span>
<span class="t" style="left:751.46px;top:242.72px;font-size:12.5px;line-height:12.5px;color:#484644;transform:scaleX(1.0769);">ab</span>
<span class="t" style="left:751.94px;top:252.22px;font-size:12.5px;line-height:12.5px;color:#484644;transform:scaleX(1.1163);">c</span>
<span class="t" style="left:648.00px;top:328.86px;font-size:12.1px;line-height:12.1px;color:#484644;transform:scaleX(1.0703);">Alineación</span>
<div class="a" style="left:813.00px;top:240.50px;width:173.80px;height:28.30px;background:#fff;border:1px solid #c8c6c4;"></div>
<span class="t" style="left:815.33px;top:247.93px;font-size:14.5px;line-height:14.5px;color:#252423;transform:scaleX(1.0414);">Moneda</span>
<span class="t" style="left:821.61px;top:281.95px;font-size:22.5px;line-height:22.5px;color:#484644;transform:scaleX(0.7747);">$</span>
<span class="t" style="left:865.81px;top:281.84px;font-size:25px;line-height:25px;color:#484644;transform:scaleX(0.8976);">%</span>
<span class="t" style="left:895.10px;top:288.27px;font-size:11.5px;line-height:11.5px;color:#484644;transform:scaleX(1.0612);">000</span>
<span class="t" style="left:942.74px;top:283.09px;font-size:11px;line-height:11px;color:#484644;transform:scaleX(1.0581);">,0</span>
<span class="t" style="left:936.35px;top:293.29px;font-size:11px;line-height:11px;color:#484644;transform:scaleX(1.0523);">,00</span>
<span class="t" style="left:966.35px;top:283.09px;font-size:11px;line-height:11px;color:#484644;transform:scaleX(1.0523);">,00</span>
<span class="t" style="left:972.74px;top:293.29px;font-size:11px;line-height:11px;color:#484644;transform:scaleX(1.0581);">,0</span>
<span class="t" style="left:863.87px;top:328.86px;font-size:12.1px;line-height:12.1px;color:#484644;transform:scaleX(1.1325);">Número</span>
<span class="t" style="left:1025.82px;top:277.73px;font-size:14.5px;line-height:14.5px;color:#484644;transform:scaleX(1.0526);">Formato</span>
<span class="t" style="left:1008.33px;top:297.73px;font-size:14.5px;line-height:14.5px;color:#484644;transform:scaleX(1.0775);">condicional</span>
<span class="t" style="left:1107.79px;top:277.73px;font-size:14.5px;line-height:14.5px;color:#484644;transform:scaleX(1.0751);">Dar formato</span>
<span class="t" style="left:1103.83px;top:297.73px;font-size:14.5px;line-height:14.5px;color:#484644;transform:scaleX(1.0728);">como tabla</span>
<span class="t" style="left:1198.84px;top:277.73px;font-size:14.5px;line-height:14.5px;color:#484644;transform:scaleX(1.0328);">Estilos de</span>
<span class="t" style="left:1205.85px;top:297.73px;font-size:14.5px;line-height:14.5px;color:#484644;transform:scaleX(1.0403);">celda</span>
<span class="t" style="left:1116.14px;top:328.86px;font-size:12.1px;line-height:12.1px;color:#484644;transform:scaleX(1.0628);">Estilos</span>
<span class="t" style="left:1313.23px;top:236.03px;font-size:14.5px;line-height:14.5px;color:#484644;transform:scaleX(0.9953);">Insertar</span>
<span class="t" style="left:1313.43px;top:264.83px;font-size:14.5px;line-height:14.5px;color:#484644;transform:scaleX(1.0373);">Eliminar</span>
<span class="t" style="left:1313.43px;top:293.83px;font-size:14.5px;line-height:14.5px;color:#484644;transform:scaleX(1.0411);">Formato</span>
<span class="t" style="left:1320.34px;top:328.86px;font-size:12.1px;line-height:12.1px;color:#484644;transform:scaleX(1.0512);">Celdas</span>
<span class="t" style="left:1482.00px;top:233.05px;font-size:20.5px;line-height:20.5px;color:#2b88d8;transform:scaleX(0.9761);">A</span>
<span class="t" style="left:1481.84px;top:250.65px;font-size:20.5px;line-height:20.5px;color:#484644;transform:scaleX(1.0489);">Z</span>
<span class="t" style="left:1466.36px;top:277.73px;font-size:14.5px;line-height:14.5px;color:#484644;transform:scaleX(1.0176);">Ordenar y</span>
<span class="t" style="left:1474.72px;top:297.73px;font-size:14.5px;line-height:14.5px;color:#484644;transform:scaleX(1.1181);">filtrar</span>
<span class="t" style="left:1552.91px;top:277.73px;font-size:14.5px;line-height:14.5px;color:#484644;transform:scaleX(0.9683);">Buscar y</span>
<span class="t" style="left:1536.62px;top:297.73px;font-size:14.5px;line-height:14.5px;color:#484644;transform:scaleX(1.0172);">seleccionar</span>
<span class="t" style="left:1498.92px;top:328.86px;font-size:12.1px;line-height:12.1px;color:#484644;transform:scaleX(1.0789);">Edición</span>
<span class="t" style="left:1668.79px;top:277.73px;font-size:14.5px;line-height:14.5px;color:#484644;transform:scaleX(0.9452);">Crear PDF y</span>
<span class="t" style="left:1648.84px;top:297.73px;font-size:14.5px;line-height:14.5px;color:#484644;transform:scaleX(1.0526);">compartir vínculo</span>
<span class="t" style="left:1769.75px;top:277.73px;font-size:14.5px;line-height:14.5px;color:#484644;">Crear PDF y compartir</span>
<span class="t" style="left:1802.34px;top:297.73px;font-size:14.5px;line-height:14.5px;color:#484644;transform:scaleX(1.0554);">con Outlook</span>
<span class="t" style="left:1737.50px;top:328.86px;font-size:12.1px;line-height:12.1px;color:#484644;transform:scaleX(1.1167);">Adobe Acrobat</span>
<svg class="a" style="left:0.00px;top:0.00px;" width="2236" height="1309" viewBox="0 0 2236 1309"><rect x="190" y="240.400" width="25" height="28.200" rx="0.8" fill="#fafafa" stroke="#e8912d" stroke-width="2"/><rect x="191.400" y="241.800" width="22.200" height="25.400" fill="none" stroke="#f9d3a0" stroke-width="0.9"/><path d="M195.3,243.6 v-4.6 h4.4 c0,-5.2 7.8,-5.2 7.8,0 h4.4 v4.6 z" fill="#f3f2f1" stroke="#7a7a7a" stroke-width="1.1"/><rect x="205.6" y="249.7" width="16.6" height="21" fill="#fff" stroke="#555" stroke-width="1.2"/><polyline points="199.05,301.40 202.30,304.60 205.55,301.40" fill="none" stroke="#444" stroke-width="1.1"/><g fill="none" stroke="#444" stroke-width="1.1"><path d="M238.6,234.8 L246,248.8 M246.6,234.8 L239.2,248.8"/></g><g fill="none" stroke="#2b88d8" stroke-width="1.2"><circle cx="238.6" cy="251.3" r="2.4"/><circle cx="246.6" cy="251.3" r="2.4"/></g><g fill="#f3f2f1" stroke="#444" stroke-width="1.1"><path d="M233.6,264.6 h7.4 v14.4 h-7.4 z"/><path d="M239.6,268.6 h8.2 l4.6,4.6 v9.4 h-12.8 z" fill="#fff"/><path d="M247.6,268.8 v4.6 h4.6" fill="none"/><path d="M243,276.3 h6.6 M243,279.3 h6.6" stroke-width="0.9"/></g><polyline points="262.25,271.90 265.50,275.10 268.75,271.90" fill="none" stroke="#444" stroke-width="1.1"/><path d="M233.600,302.800 L244.800,298.400 L249.800,305.800 L241.600,312.300 Z" fill="#fde3bd" stroke="#e8760a" stroke-width="1.4" stroke-linejoin="round"/><path d="M236,303.200 L243.600,300.400 L245.600,303.400 Z" fill="#fff"/><g fill="#fff" stroke="#444" stroke-width="1.1" stroke-linejoin="round"><path d="M243.400,297.400 l2.800,-1.900 l5.600,8 l-2.800,1.900 z"/><path d="M247.200,298.200 l3.900,-4.200 q1.600,-1 2.600,0.600 q0.800,1.400 -0.400,2.400 l-4.300,3.700 z"/></g><path d="M272.5,336.6 V329.5 H279.6" fill="none" stroke="#555" stroke-width="1"/><path d="M275.4,332.2 L281,337.6" stroke="#555" stroke-width="1.1"/><path d="M277.4,338.2 H281.6 V334 " fill="none" stroke="#555" stroke-width="1.1"/><line x1="286.5" y1="230" x2="286.5" y2="338" stroke="#c8c6c4" stroke-width="1"/><polyline points="429.25,254.00 432.50,257.20 435.75,254.00" fill="none" stroke="#444" stroke-width="1.2"/><polyline points="494.05,254.00 497.30,257.20 500.55,254.00" fill="none" stroke="#444" stroke-width="1.2"/><polyline points="524.80,248.20 527.50,245.40 530.20,248.20" fill="none" stroke="#2b88d8" stroke-width="1.2"/><polyline points="555.30,245.20 558.00,248.00 560.70,245.20" fill="none" stroke="#2b88d8" stroke-width="1.2"/><line x1="365.3" y1="301.6" x2="375.7" y2="301.6" stroke="#252423" stroke-width="1.1"/><polyline points="389.75,292.40 393.00,295.60 396.25,292.40" fill="none" stroke="#444" stroke-width="1.1"/><line x1="408.5" y1="281" x2="408.5" y2="307.5" stroke="#c8c6c4" stroke-width="1"/><g fill="none" stroke="#444" stroke-width="1" stroke-dasharray="1.3 1.3"><path d="M417.5,284.5 h18.5 M417.5,284.5 v15 M436,284.5 v15 M426.7,284.5 v15 M417.5,292 h18.5"/></g><line x1="417" y1="301.3" x2="436.5" y2="301.3" stroke="#252423" stroke-width="1.8"/><polyline points="446.05,292.40 449.30,295.60 452.55,292.40" fill="none" stroke="#444" stroke-width="1.1"/><line x1="464.5" y1="281" x2="464.5" y2="307.5" stroke="#c8c6c4" stroke-width="1"/><g fill="none" stroke="#444" stroke-width="1.1"><path d="M476.5,292.6 l6.4,-7 l6,5.6 l-6.6,6.6 z" fill="#fff"/><path d="M481.4,287 l-1.6,-2 c-1,-1.4 1.2,-2.6 2,-1.2 l1.4,2.2"/></g><path d="M489.5,290 c1,-1.6 2.4,-0.6 2.6,1 c0.2,1.6 -0.4,3 -0.4,3 c-1,-1.6 -2.6,-2.2 -2.2,-4z" fill="#2b88d8"/><rect x="472.5" y="299" width="20" height="5" fill="#ffee00"/><polyline points="501.25,292.40 504.50,295.60 507.75,292.40" fill="none" stroke="#444" stroke-width="1.1"/><rect x="521.5" y="299" width="20" height="5" fill="#ee1111"/><polyline points="550.55,292.40 553.80,295.60 557.05,292.40" fill="none" stroke="#444" stroke-width="1.1"/><path d="M560.0,336.6 V329.5 H567.1" fill="none" stroke="#555" stroke-width="1"/><path d="M562.9,332.2 L568.5,337.6" stroke="#555" stroke-width="1.1"/><path d="M564.9,338.2 H569.1 V334 " fill="none" stroke="#555" stroke-width="1.1"/><line x1="574" y1="230" x2="574" y2="338" stroke="#c8c6c4" stroke-width="1"/><line x1="590.3" y1="244.6" x2="607.9" y2="244.6" stroke="#444" stroke-width="1.2"/><line x1="593.3" y1="249.8" x2="604.9" y2="249.8" stroke="#444" stroke-width="1.2"/><line x1="590.3" y1="255" x2="607.9" y2="255" stroke="#444" stroke-width="1.2"/><line x1="620.4" y1="248.6" x2="638" y2="248.6" stroke="#444" stroke-width="1.2"/><line x1="623.4" y1="253.8" x2="635" y2="253.8" stroke="#444" stroke-width="1.2"/><line x1="620.4" y1="259" x2="638" y2="259" stroke="#444" stroke-width="1.2"/><line x1="650.2" y1="253" x2="668" y2="253" stroke="#444" stroke-width="1.2"/><line x1="653.2" y1="258.2" x2="665" y2="258.2" stroke="#444" stroke-width="1.2"/><line x1="650.2" y1="263.4" x2="668" y2="263.4" stroke="#444" stroke-width="1.2"/><path d="M686.300,262.600 L699.800,249.400 M694.200,249 h6 v6" fill="none" stroke="#2b88d8" stroke-width="1.3"/><polyline points="705.25,252.90 708.50,256.10 711.75,252.90" fill="none" stroke="#444" stroke-width="1.1"/><line x1="590.3" y1="285" x2="607.9" y2="285" stroke="#444" stroke-width="1.2"/><line x1="620.2" y1="285" x2="638.0" y2="285" stroke="#444" stroke-width="1.2"/><line x1="650.2" y1="285" x2="668" y2="285" stroke="#444" stroke-width="1.2"/><line x1="590.3" y1="290.4" x2="601.74" y2="290.4" stroke="#444" stroke-width="1.2"/><line x1="622.87" y1="290.4" x2="635.33" y2="290.4" stroke="#444" stroke-width="1.2"/><line x1="656.43" y1="290.4" x2="668" y2="290.4" stroke="#444" stroke-width="1.2"/><line x1="590.3" y1="295.8" x2="607.9" y2="295.8" stroke="#444" stroke-width="1.2"/><line x1="620.2" y1="295.8" x2="638.0" y2="295.8" stroke="#444" stroke-width="1.2"/><line x1="650.2" y1="295.8" x2="668" y2="295.8" stroke="#444" stroke-width="1.2"/><line x1="590.3" y1="301.2" x2="601.74" y2="301.2" stroke="#444" stroke-width="1.2"/><line x1="622.87" y1="301.2" x2="635.33" y2="301.2" stroke="#444" stroke-width="1.2"/><line x1="656.43" y1="301.2" x2="668" y2="301.2" stroke="#444" stroke-width="1.2"/><line x1="681" y1="285" x2="699" y2="285" stroke="#444" stroke-width="1.2"/><line x1="690.5" y1="290.4" x2="699" y2="290.4" stroke="#444" stroke-width="1.2"/><line x1="690.5" y1="295.8" x2="699" y2="295.8" stroke="#444" stroke-width="1.2"/><line x1="681" y1="301.2" x2="699" y2="301.2" stroke="#444" stroke-width="1.2"/><path d="M681,293.1 h7.6 M683.8,290.2 l-3,2.9 l3,2.9" fill="none" stroke="#2b88d8" stroke-width="1.3"/><line x1="711" y1="285" x2="729" y2="285" stroke="#444" stroke-width="1.2"/><line x1="720.5" y1="290.4" x2="729" y2="290.4" stroke="#444" stroke-width="1.2"/><line x1="720.5" y1="295.8" x2="729" y2="295.8" stroke="#444" stroke-width="1.2"/><line x1="711" y1="301.2" x2="729" y2="301.2" stroke="#444" stroke-width="1.2"/><path d="M711,293.1 h7.6 M715.8,290.2 l3,2.9 l-3,2.9" fill="none" stroke="#2b88d8" stroke-width="1.3"/><line x1="739.5" y1="237" x2="739.5" y2="310" stroke="#c8c6c4" stroke-width="1"/><path d="M768,255 v3 c0,2 -1.5,3.2 -3.5,3.2 h-4.2 M763.4,258 l-3.4,3.2 l3.4,3.2" fill="none" stroke="#2b88d8" stroke-width="1.3"/><g fill="none" stroke="#444" stroke-width="1.1"><rect x="749.6" y="284.6" width="18" height="17.6"/><path d="M749.6,288.4 h18 M749.6,298.4 h18 M758.6,284.6 v3.8 M758.6,298.4 v3.8"/></g><rect x="749.600" y="288.400" width="18" height="10" fill="none" stroke="#2b88d8" stroke-width="1.1"/><line x1="749.600" y1="284.600" x2="767.600" y2="284.600" stroke="#2b88d8" stroke-width="1.2"/><rect x="750.6" y="289" width="16" height="8.8" fill="#fff"/><path d="M752.4,293.4 h12.4 M755,290.8 l-2.8,2.6 l2.8,2.6 M762.2,290.8 l2.8,2.6 l-2.8,2.6" fill="none" stroke="#2b88d8" stroke-width="1.3"/><polyline points="778.05,292.40 781.30,295.60 784.55,292.40" fill="none" stroke="#444" stroke-width="1.1"/><path d="M788.5,336.6 V329.5 H795.6" fill="none" stroke="#555" stroke-width="1"/><path d="M791.4,332.2 L797,337.6" stroke="#555" stroke-width="1.1"/><path d="M793.4,338.2 H797.6 V334 " fill="none" stroke="#555" stroke-width="1.1"/><line x1="802.5" y1="230" x2="802.5" y2="338" stroke="#c8c6c4" stroke-width="1"/><polyline points="975.55,254.00 978.80,257.20 982.05,254.00" fill="none" stroke="#444" stroke-width="1.2"/><polyline points="846.05,292.40 849.30,295.60 852.55,292.40" fill="none" stroke="#444" stroke-width="1.1"/><line x1="924.3" y1="281" x2="924.3" y2="307.5" stroke="#c8c6c4" stroke-width="1"/><path d="M933.400,289.200 h10.600 M937,285.800 l-3.800,3.400 l3.800,3.400" fill="none" stroke="#2b88d8" stroke-width="1.3"/><path d="M962.800,298.800 h10.600 M969.800,295.400 l3.800,3.400 l-3.800,3.400" fill="none" stroke="#2b88d8" stroke-width="1.3"/><path d="M981.5,336.6 V329.5 H988.6" fill="none" stroke="#555" stroke-width="1"/><path d="M984.4,332.2 L990,337.6" stroke="#555" stroke-width="1.1"/><path d="M986.4,338.2 H990.6 V334 " fill="none" stroke="#555" stroke-width="1.1"/><line x1="996.3" y1="230" x2="996.3" y2="338" stroke="#c8c6c4" stroke-width="1"/><rect x="1037.6" y="238.6" width="34" height="26.6" fill="#fff"/><rect x="1044" y="239" width="15.4" height="8.6" fill="#f4828c" stroke="#e03a3e" stroke-width="1"/><rect x="1044" y="247.8" width="10" height="8.6" fill="#5ea0e6" stroke="#2b7cd3" stroke-width="1"/><rect x="1044" y="256.6" width="18" height="8.4" fill="#f4828c" stroke="#e03a3e" stroke-width="1"/><g fill="none" stroke="#555" stroke-width="1.1"><rect x="1037.6" y="238.6" width="34" height="26.6"/><path d="M1043.8,238.6 v26.6 M1065.2,238.6 v26.6 M1037.6,247.6 h6 M1037.6,256.4 h6 M1059.6,247.6 h12 M1054.4,256.4 h17.2"/></g><polyline points="1090.25,301.90 1093.50,305.10 1096.75,301.90" fill="none" stroke="#444" stroke-width="1.1"/><rect x="1132.6" y="238.6" width="33.6" height="26.6" fill="#fff"/><rect x="1143.6" y="247.6" width="22.6" height="17.6" fill="#9ec8f2"/><g fill="none" stroke="#555" stroke-width="1.1"><rect x="1132.6" y="238.6" width="33.6" height="26.6"/><path d="M1132.6,247.4 h33.6 M1132.6,256.4 h33.6 M1143.6,238.6 v26.6 M1154.8,238.6 v26.6"/></g><path d="M1143.6,256.4 h22.6 M1154.8,247.4 v18" stroke="#2b7cd3" stroke-width="1.1" fill="none"/><g transform="translate(1141.5,245)"><path d="M24.4,2.4 c1.6,-1.6 4,0.4 2.8,2.4 l-11.6,15 l-4.2,-3.2 z" fill="#fff" stroke="#555" stroke-width="1.1"/><path d="M11,17.4 l4.2,3.2 c0,4.4 -5,6.2 -12.4,5.2 c3.4,-1.4 2.2,-7.2 8.2,-8.4z" fill="#5ea0e6" stroke="#2b7cd3" stroke-width="1"/></g><polyline points="1184.75,301.90 1188.00,305.10 1191.25,301.90" fill="none" stroke="#444" stroke-width="1.1"/><rect x="1213.6" y="238.6" width="33.6" height="26.6" fill="#fff"/><rect x="1220.6" y="244.6" width="21" height="14.6" fill="#9ec8f2" stroke="#2b7cd3" stroke-width="1"/><g fill="none" stroke="#555" stroke-width="1.1"><rect x="1213.6" y="238.6" width="33.6" height="26.6"/><path d="M1213.6,244.4 h33.6 M1213.6,259.4 h33.6 M1220.4,238.6 v26.6 M1241.8,238.6 v26.6"/></g><g transform="translate(1222.5,245)"><path d="M24.4,2.4 c1.6,-1.6 4,0.4 2.8,2.4 l-11.6,15 l-4.2,-3.2 z" fill="#fff" stroke="#555" stroke-width="1.1"/><path d="M11,17.4 l4.2,3.2 c0,4.4 -5,6.2 -12.4,5.2 c3.4,-1.4 2.2,-7.2 8.2,-8.4z" fill="#5ea0e6" stroke="#2b7cd3" stroke-width="1"/></g><polyline points="1247.25,301.90 1250.50,305.10 1253.75,301.90" fill="none" stroke="#444" stroke-width="1.1"/><line x1="1275.5" y1="230" x2="1275.5" y2="338" stroke="#c8c6c4" stroke-width="1"/><rect x="1290.1" y="233.6" width="20" height="17" fill="#fff"/><g fill="none" stroke="#555" stroke-width="1.1"><rect x="1290.1" y="233.6" width="20" height="17"/><path d="M1290.1,239.2 h20 M1290.1,244.8 h20 M1296.7,233.6 v17 M1303.5,233.6 v17"/></g><rect x="1300" y="238.400" width="10" height="7.400" fill="#6aaae8" stroke="#1e6fbf" stroke-width="1"/><path d="M1303.300,238.400 v7.400 M1306.700,238.400 v7.400" stroke="#1e6fbf" stroke-width="0.9"/><path d="M1290.800,242.100 h9 M1294.600,238.400 l-4,3.700 l4,3.700" fill="none" stroke="#2b88d8" stroke-width="1.5"/><polyline points="1376.75,241.40 1380.00,244.60 1383.25,241.40" fill="none" stroke="#444" stroke-width="1.1"/><rect x="1290.1" y="262.6" width="20" height="17" fill="#fff"/><g fill="none" stroke="#555" stroke-width="1.1"><rect x="1290.1" y="262.6" width="20" height="17"/><path d="M1290.1,268.2 h20 M1290.1,273.8 h20 M1296.7,262.6 v17 M1303.5,262.6 v17"/></g><rect x="1293.6" y="267.6" width="7.6" height="6.6" fill="#5ea0e6" stroke="#2b88d8" stroke-width="1"/><path d="M1302.6,267.2 l6.2,6.2 M1308.8,267.2 l-6.2,6.2" stroke="#e81123" stroke-width="1.5" fill="none"/><polyline points="1381.75,270.40 1385.00,273.60 1388.25,270.40" fill="none" stroke="#444" stroke-width="1.1"/><rect x="1290.1" y="293.1" width="20" height="16.4" fill="#fff"/><g fill="none" stroke="#555" stroke-width="1.1"><rect x="1290.1" y="293.1" width="20" height="16.4"/><path d="M1290.1,298.7 h20 M1290.1,304.3 h20 M1296.7,293.1 v16.4 M1303.5,293.1 v16.4"/></g><rect x="1296.6" y="298.6" width="7.4" height="6" fill="#5ea0e6" stroke="#2b88d8" stroke-width="1"/><path d="M1292,292.4 h15.6 M1292,290.2 v4.4 M1307.6,290.2 v4.4" stroke="#2b88d8" stroke-width="1.2" fill="none"/><polyline points="1375.05,299.20 1378.30,302.40 1381.55,299.20" fill="none" stroke="#444" stroke-width="1.1"/><line x1="1406.3" y1="230" x2="1406.3" y2="338" stroke="#c8c6c4" stroke-width="1"/><path d="M1438.6,236.6 v-2.8 h-15.4 l8.4,8 l-8.4,8 h15.4 v-2.8" fill="none" stroke="#444" stroke-width="1.4"/><polyline points="1449.75,241.40 1453.00,244.60 1456.25,241.40" fill="none" stroke="#444" stroke-width="1.1"/><rect x="1421.1" y="262.6" width="19.4" height="16.6" fill="#fff" stroke="#444" stroke-width="1.2"/><line x1="1421" y1="265.8" x2="1440.6" y2="265.8" stroke="#444" stroke-width="1.2"/><path d="M1430.8,267.6 v8 M1427.6,272.8 l3.2,3 l3.2,-3" fill="none" stroke="#2b88d8" stroke-width="1.3"/><polyline points="1447.05,270.40 1450.30,273.60 1453.55,270.40" fill="none" stroke="#444" stroke-width="1.1"/><path d="M1421.6,300.6 l9.8,-9.6 l8.6,8 l-9.8,9.8 z" fill="#fff" stroke="#b146c2" stroke-width="1.4"/><path d="M1421.6,300.6 l4.9,-4.8 l8.6,8.2 l-4.9,4.8 z" fill="#c77dd6" stroke="#b146c2" stroke-width="1.2"/><polyline points="1447.05,299.20 1450.30,302.40 1453.55,299.20" fill="none" stroke="#444" stroke-width="1.1"/><path d="M1497.6,244.6 h19.6 l-7.2,8.6 v8.6 l-5.2,0 v-8.6 z" fill="#fff" stroke="#444" stroke-width="1.2"/><polyline points="1515.75,301.90 1519.00,305.10 1522.25,301.90" fill="none" stroke="#444" stroke-width="1.1"/><circle cx="1585.2" cy="247" r="12.4" fill="#fafafa" stroke="#444" stroke-width="1.3"/><line x1="1576" y1="256" x2="1562.4" y2="269.6" stroke="#444" stroke-width="1.5"/><polyline points="1615.75,301.90 1619.00,305.10 1622.25,301.90" fill="none" stroke="#444" stroke-width="1.1"/><line x1="1637" y1="230" x2="1637" y2="338" stroke="#c8c6c4" stroke-width="1"/><g fill="none" stroke="#4a7ee8" stroke-width="1.4" stroke-linejoin="round"><path d="M1708.8,263.7 H1701.5 Q1699.3,263.7 1699.3,261.5 V242.6 Q1699.3,240.4 1701.5,240.4 H1711.3 Q1712.7,240.4 1713.7,241.4 L1717.1,244.8 Q1718.1,245.8 1718.1,247.20000000000002 V253.9"/><path d="M1703.8999999999999,255.8 c2.600,-1.400 4.800,-6 4.800,-8.800 c0,-1.100 -1.100,-1.100 -1.100,0 c0,3.200 3.400,7 6.400,7.200 c1.200,0 1.200,-1 0,-1 c-3.600,0 -7.800,1.400 -10.100,2.600 z" stroke-width="0.9"/></g><circle cx="1717" cy="261" r="8" fill="#f3f2f1"/><rect x="1714.8" y="255.20000000000002" width="9.800" height="5.800" rx="2.900" transform="rotate(-45 1719.7 258.1)" fill="none" stroke="#4a7ee8" stroke-width="1.5"/><rect x="1709.3999999999999" y="260.6" width="9.800" height="5.800" rx="2.900" transform="rotate(-45 1714.3 263.5)" fill="none" stroke="#4a7ee8" stroke-width="1.5"/><g fill="none" stroke="#4a7ee8" stroke-width="1.4" stroke-linejoin="round"><path d="M1845.1,263.7 H1837.8 Q1835.6,263.7 1835.6,261.5 V242.6 Q1835.6,240.4 1837.8,240.4 H1847.6 Q1849.0,240.4 1850.0,241.4 L1853.3999999999999,244.8 Q1854.3999999999999,245.8 1854.3999999999999,247.20000000000002 V253.9"/><path d="M1840.1999999999998,255.8 c2.600,-1.400 4.800,-6 4.800,-8.800 c0,-1.100 -1.100,-1.100 -1.100,0 c0,3.200 3.400,7 6.400,7.200 c1.200,0 1.200,-1 0,-1 c-3.600,0 -7.800,1.400 -10.100,2.600 z" stroke-width="0.9"/></g><rect x="1844" y="254.800" width="17" height="13.600" fill="#f3f2f1"/><rect x="1846" y="257.200" width="13.800" height="10" rx="1.2" fill="#f3f2f1" stroke="#4a7ee8" stroke-width="1.4"/><path d="M1846.800,258.200 l6.100,5 l6.100,-5" fill="none" stroke="#4a7ee8" stroke-width="1.2"/><line x1="1928" y1="230" x2="1928" y2="338" stroke="#c8c6c4" stroke-width="1"/><polyline points="2063.50,338.80 2069.00,333.20 2074.50,338.80" fill="none" stroke="#444" stroke-width="1.3"/></svg>
<div class="a" style="left:170.00px;top:344.00px;width:1914.00px;height:56.00px;background:#e6e6e6;"></div>
<div class="a" style="left:170.00px;top:343.50px;width:1914.00px;height:4.50px;background:linear-gradient(#d4d3d2,#e6e6e6);"></div>
<div class="a" style="left:173.00px;top:357.00px;width:254.50px;height:30.00px;background:#fff;border:1px solid #c6c6c6;"></div>
<span class="t" style="left:179.31px;top:365.24px;font-size:14.6px;line-height:14.6px;color:#444;transform:scaleX(1.0543);">E8</span>
<div class="a" style="left:464.50px;top:357.00px;width:137.00px;height:30.00px;background:#fff;border:1px solid #c6c6c6;"></div>
<div class="a" style="left:605.00px;top:357.00px;width:1476.00px;height:30.00px;background:#fff;border:1px solid #c6c6c6;"></div>
<span class="t" style="left:618.20px;top:365.24px;font-size:14.6px;line-height:14.6px;color:#444;transform:scaleX(1.0618);">=+D8</span>
<svg class="a" style="left:0.00px;top:0.00px;" width="2236" height="1309" viewBox="0 0 2236 1309"><path d="M411.2,370.3 h7.2 l-3.6,4 z" fill="#666"/><rect x="444.800" y="365" width="3" height="2.600" fill="#a3a3a3"/><rect x="444.800" y="370.5" width="3" height="2.600" fill="#a3a3a3"/><rect x="444.800" y="376" width="3" height="2.600" fill="#a3a3a3"/><path d="M480.6,365.6 l13,12.8 M493.6,365.6 l-13,12.8" stroke="#c0c0c0" stroke-width="1.7" fill="none"/><path d="M525,373.6 l5,5 l10,-12.6" stroke="#c0c0c0" stroke-width="2.2" fill="none"/><path d="M2067,369.400 l4.600,4.400 l4.600,-4.400" stroke="#505050" stroke-width="2.4" fill="none"/></svg>
<span class="t" style="left:568.5px;top:362.5px;font-family:'Liberation Serif',serif;font-style:italic;font-weight:bold;font-size:17px;line-height:17px;color:#666;letter-spacing:-0.5px;">fx</span>
<div class="a" style="left:170.00px;top:400.00px;width:1890.50px;height:708.00px;background:#fff;"></div>
<div class="a" style="left:2023.00px;top:400.00px;width:37.00px;height:708.00px;background:#e6e6e6;"></div>
<div class="a" style="left:2060.00px;top:399.50px;width:1.00px;height:708.50px;background:#ababab;"></div>
<div class="a" style="left:1999.00px;top:399.50px;width:62.00px;height:1.00px;background:#b5b5b5;"></div>
<div class="a" style="left:170.00px;top:578.00px;width:38.00px;height:1.00px;background:#9a9a9a;"></div>
<div class="a" style="left:1849.50px;top:578.00px;width:210.50px;height:1.00px;background:#9a9a9a;"></div>
<div class="a" style="left:170px;top:528px;width:1890px;height:580px;overflow:hidden;"><div class="a" style="left:-170px;top:-528px;width:2236px;height:1309px;"><div class="a" style="left:208.00px;top:542.00px;width:1641.50px;height:36.00px;background:#006414;"></div>
<span class="t" style="left:212.50px;top:551.76px;font-size:18px;line-height:18px;color:#fff;font-weight:bold;">DESCRIPCIÓN</span>
<span class="t" style="left:1027.97px;top:551.76px;font-size:18px;line-height:18px;color:#fff;font-weight:bold;">NORMATIVIDAD</span>
<span class="t" style="left:1245.66px;top:551.76px;font-size:18px;line-height:18px;color:#fff;font-weight:bold;">VALOR INICIAL</span>
<span class="t" style="left:1456.33px;top:551.76px;font-size:18px;line-height:18px;color:#fff;font-weight:bold;">VALOR  A DECLARAR</span>
<span class="t" style="left:1714.67px;top:551.76px;font-size:18px;line-height:18px;color:#fff;font-weight:bold;">LIMITANTES</span>
<div class="a" style="left:986.00px;top:544.00px;width:1.00px;height:33.00px;border-left:1px dotted rgba(255,255,255,0.85);"></div>
<div class="a" style="left:1207.50px;top:544.00px;width:1.00px;height:33.00px;border-left:1px dotted rgba(255,255,255,0.85);"></div>
<div class="a" style="left:1414.80px;top:544.00px;width:1.00px;height:33.00px;border-left:1px dotted rgba(255,255,255,0.85);"></div>
<div class="a" style="left:1685.50px;top:544.00px;width:1.00px;height:33.00px;border-left:1px dotted rgba(255,255,255,0.85);"></div>
<div class="a" style="left:208.00px;top:578.00px;width:1641.50px;height:26.00px;background:#bfbfbf;"></div>
<span class="t" style="left:212.30px;top:583.26px;font-size:18px;line-height:18px;color:#000;font-weight:bold;">INGRESOS POR GANANCIAS OCASIONALES EN EL PAIS</span>
<div class="a" style="left:208.00px;top:604.00px;width:1641.50px;height:26.00px;background:#e2efda;"></div>
<div class="a" style="left:1208.00px;top:604.00px;width:207.30px;height:26.00px;background:#fff;"></div>
<span class="t" style="left:212.50px;top:608.56px;font-size:18px;line-height:18px;color:#000;font-style:italic;transform:scaleX(1.0085);">Ingresos recibidos por Porción Conyugal</span>
<span class="t" style="left:1051.31px;top:608.56px;font-size:18px;line-height:18px;color:#000;font-style:italic;">Art. 47 E.T.</span>
<span class="t" style="left:1384.57px;top:608.56px;font-size:18px;line-height:18px;color:#000;font-style:italic;">$ 0</span>
<span class="t" style="left:1655.77px;top:608.56px;font-size:18px;line-height:18px;color:#000;font-style:italic;">$ 0</span>
<span class="t" style="left:1752.30px;top:608.56px;font-size:18px;line-height:18px;color:#000;font-style:italic;">N/A</span>
<div class="a" style="left:208.00px;top:630.00px;width:1641.50px;height:26.00px;background:#e2efda;"></div>
<div class="a" style="left:1208.00px;top:630.00px;width:207.30px;height:26.00px;background:#fff;"></div>
<span class="t" style="left:212.50px;top:634.56px;font-size:18px;line-height:18px;color:#000;font-style:italic;transform:scaleX(1.0085);">Ingresos por la Venta de Inmuebles poseídos por 2 años o más</span>
<span class="t" style="left:1046.30px;top:634.56px;font-size:18px;line-height:18px;color:#000;font-style:italic;">Art. 300 E.T.</span>
<span class="t" style="left:1384.57px;top:634.56px;font-size:18px;line-height:18px;color:#000;font-style:italic;">$ 0</span>
<span class="t" style="left:1655.77px;top:634.56px;font-size:18px;line-height:18px;color:#000;font-style:italic;">$ 0</span>
<span class="t" style="left:1752.30px;top:634.56px;font-size:18px;line-height:18px;color:#000;font-style:italic;">N/A</span>
<div class="a" style="left:208.00px;top:656.00px;width:1641.50px;height:26.00px;background:#e2efda;"></div>
<div class="a" style="left:1208.00px;top:656.00px;width:207.30px;height:26.00px;background:#fff;"></div>
<span class="t" style="left:212.50px;top:660.56px;font-size:18px;line-height:18px;color:#000;font-style:italic;transform:scaleX(1.0085);">Ingresos por la Venta de Inversiones poseídos por 2 años o más</span>
<span class="t" style="left:1046.30px;top:660.56px;font-size:18px;line-height:18px;color:#000;font-style:italic;">Art. 300 E.T.</span>
<span class="t" style="left:1384.57px;top:660.56px;font-size:18px;line-height:18px;color:#000;font-style:italic;">$ 0</span>
<span class="t" style="left:1655.77px;top:660.56px;font-size:18px;line-height:18px;color:#000;font-style:italic;">$ 0</span>
<span class="t" style="left:1752.30px;top:660.56px;font-size:18px;line-height:18px;color:#000;font-style:italic;">N/A</span>
<div class="a" style="left:208.00px;top:682.00px;width:1641.50px;height:26.00px;background:#e2efda;"></div>
<div class="a" style="left:1208.00px;top:682.00px;width:207.30px;height:26.00px;background:#fff;"></div>
<span class="t" style="left:212.50px;top:686.56px;font-size:18px;line-height:18px;color:#000;font-style:italic;transform:scaleX(1.0085);">Ingresos por la Venta de Otros Activos Fijos poseídos por 2 años o más</span>
<span class="t" style="left:1046.30px;top:686.56px;font-size:18px;line-height:18px;color:#000;font-style:italic;">Art. 300 E.T.</span>
<span class="t" style="left:1384.57px;top:686.56px;font-size:18px;line-height:18px;color:#000;font-style:italic;">$ 0</span>
<span class="t" style="left:1655.77px;top:686.56px;font-size:18px;line-height:18px;color:#000;font-style:italic;">$ 0</span>
<span class="t" style="left:1752.30px;top:686.56px;font-size:18px;line-height:18px;color:#000;font-style:italic;">N/A</span>
<div class="a" style="left:208.00px;top:708.00px;width:1641.50px;height:26.00px;background:#e2efda;"></div>
<div class="a" style="left:1208.00px;top:708.00px;width:207.30px;height:26.00px;background:#fff;"></div>
<span class="t" style="left:212.50px;top:712.56px;font-size:18px;line-height:18px;color:#000;font-style:italic;transform:scaleX(1.0085);">Ingresos obtenidos en la liquidación de sociedades</span>
<span class="t" style="left:1046.30px;top:712.56px;font-size:18px;line-height:18px;color:#000;font-style:italic;">Art. 301 E.T.</span>
<span class="t" style="left:1384.57px;top:712.56px;font-size:18px;line-height:18px;color:#000;font-style:italic;">$ 0</span>
<span class="t" style="left:1655.77px;top:712.56px;font-size:18px;line-height:18px;color:#000;font-style:italic;">$ 0</span>
<span class="t" style="left:1752.30px;top:712.56px;font-size:18px;line-height:18px;color:#000;font-style:italic;">N/A</span>
<div class="a" style="left:208.00px;top:734.00px;width:1641.50px;height:26.00px;background:#e2efda;"></div>
<div class="a" style="left:1208.00px;top:734.00px;width:207.30px;height:26.00px;background:#fff;"></div>
<span class="t" style="left:212.50px;top:738.56px;font-size:18px;line-height:18px;color:#000;font-style:italic;transform:scaleX(1.0085);">Ingresos por Herencia</span>
<span class="t" style="left:1046.30px;top:738.56px;font-size:18px;line-height:18px;color:#000;font-style:italic;">Art. 303 E.T.</span>
<span class="t" style="left:1384.57px;top:738.56px;font-size:18px;line-height:18px;color:#000;font-style:italic;">$ 0</span>
<span class="t" style="left:1655.77px;top:738.56px;font-size:18px;line-height:18px;color:#000;font-style:italic;">$ 0</span>
<span class="t" style="left:1752.30px;top:738.56px;font-size:18px;line-height:18px;color:#000;font-style:italic;">N/A</span>
<div class="a" style="left:208.00px;top:760.00px;width:1641.50px;height:26.00px;background:#e2efda;"></div>
<div class="a" style="left:1208.00px;top:760.00px;width:207.30px;height:26.00px;background:#fff;"></div>
<span class="t" style="left:212.50px;top:764.56px;font-size:18px;line-height:18px;color:#000;font-style:italic;transform:scaleX(1.0085);">Ingresos por Legados</span>
<span class="t" style="left:1046.30px;top:764.56px;font-size:18px;line-height:18px;color:#000;font-style:italic;">Art. 303 E.T.</span>
<span class="t" style="left:1384.57px;top:764.56px;font-size:18px;line-height:18px;color:#000;font-style:italic;">$ 0</span>
<span class="t" style="left:1655.77px;top:764.56px;font-size:18px;line-height:18px;color:#000;font-style:italic;">$ 0</span>
<span class="t" style="left:1752.30px;top:764.56px;font-size:18px;line-height:18px;color:#000;font-style:italic;">N/A</span>
<div class="a" style="left:208.00px;top:786.00px;width:1641.50px;height:26.00px;background:#e2efda;"></div>
<div class="a" style="left:1208.00px;top:786.00px;width:207.30px;height:26.00px;background:#fff;"></div>
<span class="t" style="left:212.50px;top:790.56px;font-size:18px;line-height:18px;color:#000;font-style:italic;transform:scaleX(1.0085);">Ingresos por Donaciones</span>
<span class="t" style="left:1046.30px;top:790.56px;font-size:18px;line-height:18px;color:#000;font-style:italic;">Art. 303 E.T.</span>
<span class="t" style="left:1384.57px;top:790.56px;font-size:18px;line-height:18px;color:#000;font-style:italic;">$ 0</span>
<span class="t" style="left:1655.77px;top:790.56px;font-size:18px;line-height:18px;color:#000;font-style:italic;">$ 0</span>
<span class="t" style="left:1752.30px;top:790.56px;font-size:18px;line-height:18px;color:#000;font-style:italic;">N/A</span>
<div class="a" style="left:208.00px;top:812.00px;width:1641.50px;height:26.00px;background:#e2efda;"></div>
<div class="a" style="left:1208.00px;top:812.00px;width:207.30px;height:26.00px;background:#fff;"></div>
<span class="t" style="left:212.50px;top:816.56px;font-size:18px;line-height:18px;color:#000;font-style:italic;transform:scaleX(1.0085);">Ingresos por Loterías Rifas Apuestas y similares</span>
<span class="t" style="left:1046.30px;top:816.56px;font-size:18px;line-height:18px;color:#000;font-style:italic;">Art. 304 E.T.</span>
<span class="t" style="left:1384.57px;top:816.56px;font-size:18px;line-height:18px;color:#000;font-style:italic;">$ 0</span>
<span class="t" style="left:1655.77px;top:816.56px;font-size:18px;line-height:18px;color:#000;font-style:italic;">$ 0</span>
<span class="t" style="left:1752.30px;top:816.56px;font-size:18px;line-height:18px;color:#000;font-style:italic;">N/A</span>
<div class="a" style="left:208.00px;top:838.00px;width:1641.50px;height:26.00px;background:#e2efda;"></div>
<div class="a" style="left:1208.00px;top:838.00px;width:207.30px;height:26.00px;background:#fff;"></div>
<span class="t" style="left:212.50px;top:842.56px;font-size:18px;line-height:18px;color:#000;font-style:italic;transform:scaleX(1.0085);">Ingresos por Enajenación Apartamento habitación poseído por 2 años o más</span>
<span class="t" style="left:1046.30px;top:842.56px;font-size:18px;line-height:18px;color:#000;font-style:italic;">Art. 300 E.T.</span>
<span class="t" style="left:1384.57px;top:842.56px;font-size:18px;line-height:18px;color:#000;font-style:italic;">$ 0</span>
<span class="t" style="left:1655.77px;top:842.56px;font-size:18px;line-height:18px;color:#000;font-style:italic;">$ 0</span>
<span class="t" style="left:1752.30px;top:842.56px;font-size:18px;line-height:18px;color:#000;font-style:italic;">N/A</span>
<div class="a" style="left:208.00px;top:864.00px;width:1641.50px;height:48.00px;background:#e2efda;"></div>
<div class="a" style="left:1208.00px;top:864.00px;width:207.30px;height:48.00px;background:#fff;"></div>
<span class="t" style="left:211.61px;top:868.06px;font-size:18px;line-height:18px;color:#000;font-style:italic;transform:scaleX(1.0173);">Ganancias ocasionales provenientes de la enajenación de las acciones o participaciones en la</span>
<span class="t" style="left:212.50px;top:891.86px;font-size:18px;line-height:18px;color:#000;font-style:italic;transform:scaleX(1.0085);">ECE que correspondan a utilidades que estuvieron sometidas a tributación</span>
<span class="t" style="left:1046.30px;top:880.36px;font-size:18px;line-height:18px;color:#000;font-style:italic;">Art. 893 E.T.</span>
<span class="t" style="left:1384.57px;top:880.36px;font-size:18px;line-height:18px;color:#000;font-style:italic;">$ 0</span>
<span class="t" style="left:1655.77px;top:880.36px;font-size:18px;line-height:18px;color:#000;font-style:italic;">$ 0</span>
<span class="t" style="left:1752.30px;top:880.36px;font-size:18px;line-height:18px;color:#000;font-style:italic;">N/A</span>
<div class="a" style="left:208.00px;top:912.00px;width:1641.50px;height:26.00px;background:#e2efda;"></div>
<div class="a" style="left:1208.00px;top:912.00px;width:207.30px;height:26.00px;background:#fff;"></div>
<span class="t" style="left:212.50px;top:916.56px;font-size:18px;line-height:18px;color:#000;font-style:italic;transform:scaleX(1.0085);">Otros</span>
<span class="t" style="left:1384.57px;top:916.56px;font-size:18px;line-height:18px;color:#000;font-style:italic;">$ 0</span>
<span class="t" style="left:1655.77px;top:916.56px;font-size:18px;line-height:18px;color:#000;font-style:italic;">$ 0</span>
<span class="t" style="left:1752.30px;top:916.56px;font-size:18px;line-height:18px;color:#000;font-style:italic;">N/A</span>
<div class="a" style="left:208.00px;top:603.50px;width:1641.50px;height:1.00px;background:repeating-linear-gradient(90deg,#117022 0 3.2px,transparent 3.2px 4.5px);"></div>
<div class="a" style="left:208.00px;top:629.50px;width:1641.50px;height:1.00px;background:repeating-linear-gradient(90deg,#117022 0 3.2px,transparent 3.2px 4.5px);"></div>
<div class="a" style="left:208.00px;top:655.50px;width:1641.50px;height:1.00px;background:repeating-linear-gradient(90deg,#117022 0 3.2px,transparent 3.2px 4.5px);"></div>
<div class="a" style="left:208.00px;top:681.50px;width:1641.50px;height:1.00px;background:repeating-linear-gradient(90deg,#117022 0 3.2px,transparent 3.2px 4.5px);"></div>
<div class="a" style="left:208.00px;top:707.50px;width:1641.50px;height:1.00px;background:repeating-linear-gradient(90deg,#117022 0 3.2px,transparent 3.2px 4.5px);"></div>
<div class="a" style="left:208.00px;top:733.50px;width:1641.50px;height:1.00px;background:repeating-linear-gradient(90deg,#117022 0 3.2px,transparent 3.2px 4.5px);"></div>
<div class="a" style="left:208.00px;top:759.50px;width:1641.50px;height:1.00px;background:repeating-linear-gradient(90deg,#117022 0 3.2px,transparent 3.2px 4.5px);"></div>
<div class="a" style="left:208.00px;top:785.50px;width:1641.50px;height:1.00px;background:repeating-linear-gradient(90deg,#117022 0 3.2px,transparent 3.2px 4.5px);"></div>
<div class="a" style="left:208.00px;top:811.50px;width:1641.50px;height:1.00px;background:repeating-linear-gradient(90deg,#117022 0 3.2px,transparent 3.2px 4.5px);"></div>
<div class="a" style="left:208.00px;top:837.50px;width:1641.50px;height:1.00px;background:repeating-linear-gradient(90deg,#117022 0 3.2px,transparent 3.2px 4.5px);"></div>
<div class="a" style="left:208.00px;top:863.50px;width:1641.50px;height:1.00px;background:repeating-linear-gradient(90deg,#117022 0 3.2px,transparent 3.2px 4.5px);"></div>
<div class="a" style="left:208.00px;top:911.50px;width:1641.50px;height:1.00px;background:repeating-linear-gradient(90deg,#117022 0 3.2px,transparent 3.2px 4.5px);"></div>
<div class="a" style="left:208.00px;top:937.50px;width:1641.50px;height:1.00px;background:repeating-linear-gradient(90deg,#117022 0 3.2px,transparent 3.2px 4.5px);"></div>
<div class="a" style="left:986.00px;top:604.00px;width:1.00px;height:334.00px;background:repeating-linear-gradient(180deg,#117022 0 3.2px,transparent 3.2px 4.5px);"></div>
<div class="a" style="left:1207.50px;top:604.00px;width:1.00px;height:334.00px;background:repeating-linear-gradient(180deg,#117022 0 3.2px,transparent 3.2px 4.5px);"></div>
<div class="a" style="left:1414.80px;top:604.00px;width:1.00px;height:334.00px;background:repeating-linear-gradient(180deg,#117022 0 3.2px,transparent 3.2px 4.5px);"></div>
<div class="a" style="left:1685.50px;top:604.00px;width:1.00px;height:334.00px;background:repeating-linear-gradient(180deg,#117022 0 3.2px,transparent 3.2px 4.5px);"></div>
<div class="a" style="left:207.50px;top:578.00px;width:1.00px;height:360.00px;background:#117022;"></div>
<div class="a" style="left:1848.50px;top:578.00px;width:1.00px;height:360.00px;background:#117022;"></div>
<div class="a" style="left:207.50px;top:938.00px;width:1642.00px;height:26.80px;background:#006414;"></div>
<svg class="a" style="left:0.00px;top:0.00px;" width="2236" height="1309" viewBox="0 0 2236 1309"><path d="M1208.8,938.6 h6.4 l-6.4,4.6 z M1416,938.6 h6.4 l-6.4,4.6 z" fill="#2f9e3f"/></svg>
<div class="a" style="left:208.00px;top:937.50px;width:1641.50px;height:1.00px;border-top:1px dotted rgba(255,255,255,0.8);"></div>
<div class="a" style="left:1207.50px;top:939.00px;width:1.00px;height:24.00px;border-left:1px dotted rgba(255,255,255,0.85);"></div>
<div class="a" style="left:1414.80px;top:939.00px;width:1.00px;height:24.00px;border-left:1px dotted rgba(255,255,255,0.85);"></div>
<div class="a" style="left:1685.50px;top:939.00px;width:1.00px;height:24.00px;border-left:1px dotted rgba(255,255,255,0.85);"></div>
<span class="t" style="left:1122.16px;top:942.56px;font-size:18px;line-height:18px;color:#fff;font-weight:bold;">TOTALES</span>
<span class="t" style="left:1386.97px;top:942.56px;font-size:18px;line-height:18px;color:#fff;font-weight:bold;">$ 0</span>
<span class="t" style="left:1657.47px;top:942.56px;font-size:18px;line-height:18px;color:#fff;font-weight:bold;">$ 0</span>
<div class="a" style="left:208.00px;top:990.50px;width:1641.50px;height:25.50px;background:#bfbfbf;"></div>
<span class="t" style="left:212.30px;top:995.76px;font-size:18px;line-height:18px;color:#000;font-weight:bold;">INGRESOS POR GANANCIAS OCASIONALES EN EL EXTERIOR</span>
<div class="a" style="left:208.00px;top:1016.00px;width:1641.50px;height:26.00px;background:#e2efda;"></div>
<div class="a" style="left:1208.00px;top:1016.00px;width:207.30px;height:26.00px;background:#fff;"></div>
<span class="t" style="left:212.50px;top:1020.56px;font-size:18px;line-height:18px;color:#000;font-style:italic;transform:scaleX(1.0085);">Ingresos recibidos por Porción Conyugal</span>
<span class="t" style="left:1051.31px;top:1020.56px;font-size:18px;line-height:18px;color:#000;font-style:italic;">Art. 47 E.T.</span>
<span class="t" style="left:1384.57px;top:1020.56px;font-size:18px;line-height:18px;color:#000;font-style:italic;">$ 0</span>
<span class="t" style="left:1655.77px;top:1020.56px;font-size:18px;line-height:18px;color:#000;font-style:italic;">$ 0</span>
<span class="t" style="left:1752.30px;top:1020.56px;font-size:18px;line-height:18px;color:#000;font-style:italic;">N/A</span>
<div class="a" style="left:208.00px;top:1042.00px;width:1641.50px;height:26.00px;background:#e2efda;"></div>
<div class="a" style="left:1208.00px;top:1042.00px;width:207.30px;height:26.00px;background:#fff;"></div>
<span class="t" style="left:212.50px;top:1046.56px;font-size:18px;line-height:18px;color:#000;font-style:italic;transform:scaleX(1.0085);">Ingresos por la Venta de Inmuebles poseídos por 2 años o más</span>
<span class="t" style="left:1046.30px;top:1046.56px;font-size:18px;line-height:18px;color:#000;font-style:italic;">Art. 300 E.T.</span>
<span class="t" style="left:1384.57px;top:1046.56px;font-size:18px;line-height:18px;color:#000;font-style:italic;">$ 0</span>
<span class="t" style="left:1655.77px;top:1046.56px;font-size:18px;line-height:18px;color:#000;font-style:italic;">$ 0</span>
<span class="t" style="left:1752.30px;top:1046.56px;font-size:18px;line-height:18px;color:#000;font-style:italic;">N/A</span>
<div class="a" style="left:208.00px;top:1068.00px;width:1641.50px;height:26.00px;background:#e2efda;"></div>
<div class="a" style="left:1208.00px;top:1068.00px;width:207.30px;height:26.00px;background:#fff;"></div>
<span class="t" style="left:212.50px;top:1072.56px;font-size:18px;line-height:18px;color:#000;font-style:italic;transform:scaleX(1.0085);">Ingresos por la Venta de Inversiones poseídos por 2 años o más</span>
<span class="t" style="left:1046.30px;top:1072.56px;font-size:18px;line-height:18px;color:#000;font-style:italic;">Art. 300 E.T.</span>
<span class="t" style="left:1384.57px;top:1072.56px;font-size:18px;line-height:18px;color:#000;font-style:italic;">$ 0</span>
<span class="t" style="left:1655.77px;top:1072.56px;font-size:18px;line-height:18px;color:#000;font-style:italic;">$ 0</span>
<span class="t" style="left:1752.30px;top:1072.56px;font-size:18px;line-height:18px;color:#000;font-style:italic;">N/A</span>
<div class="a" style="left:208.00px;top:1094.00px;width:1641.50px;height:26.00px;background:#e2efda;"></div>
<div class="a" style="left:1208.00px;top:1094.00px;width:207.30px;height:26.00px;background:#fff;"></div>
<span class="t" style="left:212.50px;top:1098.56px;font-size:18px;line-height:18px;color:#000;font-style:italic;transform:scaleX(1.0085);">Ingresos por la Venta de Otros Activos Fijos poseídos por 2 años o más</span>
<span class="t" style="left:1046.30px;top:1098.56px;font-size:18px;line-height:18px;color:#000;font-style:italic;">Art. 300 E.T.</span>
<span class="t" style="left:1384.57px;top:1098.56px;font-size:18px;line-height:18px;color:#000;font-style:italic;">$ 0</span>
<span class="t" style="left:1655.77px;top:1098.56px;font-size:18px;line-height:18px;color:#000;font-style:italic;">$ 0</span>
<span class="t" style="left:1752.30px;top:1098.56px;font-size:18px;line-height:18px;color:#000;font-style:italic;">N/A</span>
<div class="a" style="left:208.00px;top:1015.50px;width:1641.50px;height:1.00px;background:repeating-linear-gradient(90deg,#117022 0 3.2px,transparent 3.2px 4.5px);"></div>
<div class="a" style="left:208.00px;top:1041.50px;width:1641.50px;height:1.00px;background:repeating-linear-gradient(90deg,#117022 0 3.2px,transparent 3.2px 4.5px);"></div>
<div class="a" style="left:208.00px;top:1067.50px;width:1641.50px;height:1.00px;background:repeating-linear-gradient(90deg,#117022 0 3.2px,transparent 3.2px 4.5px);"></div>
<div class="a" style="left:208.00px;top:1093.50px;width:1641.50px;height:1.00px;background:repeating-linear-gradient(90deg,#117022 0 3.2px,transparent 3.2px 4.5px);"></div>
<div class="a" style="left:208.00px;top:1119.50px;width:1641.50px;height:1.00px;background:repeating-linear-gradient(90deg,#117022 0 3.2px,transparent 3.2px 4.5px);"></div>
<div class="a" style="left:986.00px;top:1016.00px;width:1.00px;height:104.00px;background:repeating-linear-gradient(180deg,#117022 0 3.2px,transparent 3.2px 4.5px);"></div>
<div class="a" style="left:1207.50px;top:1016.00px;width:1.00px;height:104.00px;background:repeating-linear-gradient(180deg,#117022 0 3.2px,transparent 3.2px 4.5px);"></div>
<div class="a" style="left:1414.80px;top:1016.00px;width:1.00px;height:104.00px;background:repeating-linear-gradient(180deg,#117022 0 3.2px,transparent 3.2px 4.5px);"></div>
<div class="a" style="left:1685.50px;top:1016.00px;width:1.00px;height:104.00px;background:repeating-linear-gradient(180deg,#117022 0 3.2px,transparent 3.2px 4.5px);"></div>
<div class="a" style="left:207.50px;top:990.50px;width:1.00px;height:129.50px;background:#117022;"></div>
<div class="a" style="left:1848.50px;top:990.50px;width:1.00px;height:129.50px;background:#117022;"></div>
<div class="a" style="left:207.50px;top:990.00px;width:1642.00px;height:1.00px;background:#117022;"></div>
<div class="a" style="left:1414.30px;top:655.30px;width:273.00px;height:28.00px;border:2px solid #217346;"></div>
<div class="a" style="left:1683.50px;top:679.60px;width:6.00px;height:6.00px;background:#217346;border:1px solid #fff;"></div></div></div>
<div class="a" style="left:170.00px;top:400.00px;width:1829.00px;height:127.00px;background:#006414;box-shadow:0 5px 5px -2px rgba(0,0,0,0.55);"></div>
<svg class="a" style="left:0.00px;top:0.00px;" width="2236" height="1309" viewBox="0 0 2236 1309"><defs><pattern id="dg" width="51.100" height="52.200" patternUnits="userSpaceOnUse" x="1827.8" y="425.7"><g fill="none" stroke="#0b4a16" stroke-opacity="0.5"><path d="M0.00,-2.66 L2.60,0.00 L0.00,2.66 L-2.60,0.00 Z" fill="#0b4a16" fill-opacity="0.5" stroke="none"/><path d="M0.00,-7.66 L7.50,0.00 L0.00,7.66 L-7.50,0.00 Z" stroke-width="2.12"/><path d="M0.00,-15.58 L15.25,0.00 L0.00,15.58 L-15.25,0.00 Z" stroke-width="3.11"/><path d="M0.00,-24.16 L23.65,0.00 L0.00,24.16 L-23.65,0.00 Z" stroke-width="3.04"/><path d="M51.10,-2.66 L53.70,0.00 L51.10,2.66 L48.50,0.00 Z" fill="#0b4a16" fill-opacity="0.5" stroke="none"/><path d="M51.10,-7.66 L58.60,0.00 L51.10,7.66 L43.60,0.00 Z" stroke-width="2.12"/><path d="M51.10,-15.58 L66.35,0.00 L51.10,15.58 L35.85,0.00 Z" stroke-width="3.11"/><path d="M51.10,-24.16 L74.75,0.00 L51.10,24.16 L27.45,0.00 Z" stroke-width="3.04"/><path d="M0.00,49.54 L2.60,52.20 L0.00,54.86 L-2.60,52.20 Z" fill="#0b4a16" fill-opacity="0.5" stroke="none"/><path d="M0.00,44.54 L7.50,52.20 L0.00,59.86 L-7.50,52.20 Z" stroke-width="2.12"/><path d="M0.00,36.62 L15.25,52.20 L0.00,67.78 L-15.25,52.20 Z" stroke-width="3.11"/><path d="M0.00,28.04 L23.65,52.20 L0.00,76.36 L-23.65,52.20 Z" stroke-width="3.04"/><path d="M51.10,49.54 L53.70,52.20 L51.10,54.86 L48.50,52.20 Z" fill="#0b4a16" fill-opacity="0.5" stroke="none"/><path d="M51.10,44.54 L58.60,52.20 L51.10,59.86 L43.60,52.20 Z" stroke-width="2.12"/><path d="M51.10,36.62 L66.35,52.20 L51.10,67.78 L35.85,52.20 Z" stroke-width="3.11"/><path d="M51.10,28.04 L74.75,52.20 L51.10,76.36 L27.45,52.20 Z" stroke-width="3.04"/><path d="M25.55,14.86 L36.55,26.10 L25.55,37.34 L14.55,26.10 Z" stroke-width="2.83"/><path d="M25.55,6.18 L45.05,26.10 L25.55,46.02 L6.05,26.10 Z" stroke-width="2.83"/></g></pattern><pattern id="dw" width="26.572" height="27.144" patternUnits="userSpaceOnUse" x="920.7" y="441.5"><g fill="none" stroke="#e6e6e6" stroke-opacity="0.75"><path d="M0.00,-1.38 L1.35,0.00 L0.00,1.38 L-1.35,0.00 Z" fill="#e6e6e6" fill-opacity="0.75" stroke="none"/><path d="M0.00,-3.98 L3.90,0.00 L0.00,3.98 L-3.90,0.00 Z" stroke-width="0.88"/><path d="M0.00,-8.10 L7.93,0.00 L0.00,8.10 L-7.93,0.00 Z" stroke-width="1.29"/><path d="M0.00,-12.56 L12.30,0.00 L0.00,12.56 L-12.30,0.00 Z" stroke-width="1.27"/><path d="M26.57,-1.38 L27.92,0.00 L26.57,1.38 L25.22,0.00 Z" fill="#e6e6e6" fill-opacity="0.75" stroke="none"/><path d="M26.57,-3.98 L30.47,0.00 L26.57,3.98 L22.67,0.00 Z" stroke-width="0.88"/><path d="M26.57,-8.10 L34.50,0.00 L26.57,8.10 L18.64,0.00 Z" stroke-width="1.29"/><path d="M26.57,-12.56 L38.87,0.00 L26.57,12.56 L14.27,0.00 Z" stroke-width="1.27"/><path d="M0.00,25.76 L1.35,27.14 L0.00,28.53 L-1.35,27.14 Z" fill="#e6e6e6" fill-opacity="0.75" stroke="none"/><path d="M0.00,23.16 L3.90,27.14 L0.00,31.13 L-3.90,27.14 Z" stroke-width="0.88"/><path d="M0.00,19.04 L7.93,27.14 L0.00,35.24 L-7.93,27.14 Z" stroke-width="1.29"/><path d="M0.00,14.58 L12.30,27.14 L0.00,39.71 L-12.30,27.14 Z" stroke-width="1.27"/><path d="M26.57,25.76 L27.92,27.14 L26.57,28.53 L25.22,27.14 Z" fill="#e6e6e6" fill-opacity="0.75" stroke="none"/><path d="M26.57,23.16 L30.47,27.14 L26.57,31.13 L22.67,27.14 Z" stroke-width="0.88"/><path d="M26.57,19.04 L34.50,27.14 L26.57,35.24 L18.64,27.14 Z" stroke-width="1.29"/><path d="M26.57,14.58 L38.87,27.14 L26.57,39.71 L14.27,27.14 Z" stroke-width="1.27"/><path d="M13.29,7.73 L19.01,13.57 L13.29,19.42 L7.57,13.57 Z" stroke-width="1.18"/><path d="M13.29,3.21 L23.43,13.57 L13.29,23.93 L3.15,13.57 Z" stroke-width="1.18"/></g></pattern><linearGradient id="gi" x1="0" y1="0" x2="1" y2="1"><stop offset="0" stop-color="#04661a"/><stop offset="0.45" stop-color="#045c17"/><stop offset="1" stop-color="#01280a"/></linearGradient></defs><rect x="170" y="400" width="1829" height="127" fill="url(#dg)"/></svg>
<div class="a" style="left:194.00px;top:408.00px;width:118.50px;height:108.50px;background:#fff;border-radius:5.5px;box-shadow:0 1px 4px rgba(0,0,0,0.4);"></div>
<div class="a" style="left:344.00px;top:426.00px;width:859.70px;height:72.00px;background:#fff;border-radius:8px;box-shadow:0 5px 6px rgba(0,20,0,0.65);"></div>
<div class="a" style="left:1218.00px;top:426.00px;width:195.00px;height:71.40px;background:#fff;border-radius:7px;box-shadow:0 5px 6px rgba(0,20,0,0.65);"></div>
<div class="a" style="left:1432.00px;top:426.00px;width:195.00px;height:71.40px;background:#fff;border-radius:7px;box-shadow:0 5px 6px rgba(0,20,0,0.65);"></div>
<div class="a" style="left:1647.40px;top:426.00px;width:195.20px;height:71.40px;background:#fff;border-radius:7px;box-shadow:0 5px 6px rgba(0,20,0,0.65);"></div>
<svg class="a" style="left:0.00px;top:0.00px;" width="2236" height="1309" viewBox="0 0 2236 1309"><clipPath id="tbx"><rect x="344" y="426" width="859.7" height="72" rx="8"/></clipPath><rect x="344" y="426" width="860" height="72" fill="url(#dw)" clip-path="url(#tbx)"/><g transform="translate(190,404) scale(0.09017132551848513)"><path d="M715,200 L628,258 L343,985 C310,1040 270,1075 200,1082 L200,1097 L500,1097 L500,1090 C430,1080 385,1030 395,960 L622,355 L780,690 L905,800 L955,1000 C925,1045 870,1075 820,1088 L820,1097 L1210,1097 L1210,1082 C1130,1076 1090,1050 1052,990 Z" fill="#056417"/><path d="M591,289 C578,296 535,309 513,329 C491,349 472,380 460,408 C448,436 442,465 442,497 C442,529 446,571 460,602 C474,633 493,659 528,681 C563,703 622,716 670,734 C718,752 782,768 817,786 C852,804 868,822 880,843 C892,864 891,884 888,910 C885,936 878,975 860,1000 C842,1025 817,1044 780,1060 C743,1076 663,1090 640,1096 C670,1094 772,1099 820,1085 C868,1071 903,1038 930,1010 C957,982 971,943 980,915 C989,887 988,866 986,843 C984,820 980,798 970,775 C960,752 946,726 928,707 C910,688 889,674 860,660 C831,646 789,634 754,623 C719,612 683,608 649,597 C615,586 573,569 549,555 C525,541 516,530 507,513 C498,496 496,474 497,455 C498,436 503,418 513,402 C523,386 544,371 555,360 C566,349 570,346 576,334 C582,322 588,296 591,289 Z" fill="#000" stroke="#fff" stroke-width="15" paint-order="stroke"/></g><rect x="372.5" y="445" width="7" height="39.5" rx="3.4" fill="#056417"/><rect x="1230" y="435" width="57.5" height="55.5" rx="15" fill="url(#gi)"/><rect x="1444" y="434" width="58" height="57.5" rx="15" fill="url(#gi)"/><rect x="1658" y="434" width="58.700000000000045" height="57.69999999999999" rx="15" fill="url(#gi)"/><path d="M1259,447.6 L1242.2,462.6 L1246,462.6 L1246,477.4 L1255,477.4 L1255,467.5 Q1259,464 1263,467.5 L1263,477.4 L1272,477.4 L1272,462.6 L1275.8,462.6 Z" fill="#fff" stroke="#fff" stroke-width="1.2" stroke-linejoin="round"/><path d="M1460,441 h16 l13.5,13 v22 q0,4.5 -4.5,4.5 h-25 q-4.5,0 -4.5,-4.5 v-30.5 q0,-4.5 4.500,-4.500 z" fill="#fff"/><path d="M1477.2,442 v11.6 h11.6" fill="none" stroke="#045c17" stroke-width="1.6"/><g stroke="#045c17" stroke-width="2.2" stroke-linecap="round"><path d="M1464.6,453.4 h5.4 M1464.6,460.8 h16.6 M1464.6,468.2 h16.6"/></g><path d="M1671.6,449.4 q0,-2.4 2.4,-2.4 h26.4 q2.4,0 2.4,2.4 v2 h-31.2 z" fill="#fff"/><path d="M1681.6,447 v-2.2 q0,-1.8 1.800,-1.800 h7.6 q1.8,0 1.8,1.8 v2.2" fill="none" stroke="#fff" stroke-width="1.6"/><path d="M1673.6,453.4 h27.200 l-1.6,23 q-0.2,3.600 -3.800,3.600 h-16.400 q-3.600,0 -3.800,-3.600 z" fill="#fff"/><g stroke="#045c17" stroke-width="1.6" stroke-linecap="round"><path d="M1681.4,458.6 l0.8,16 M1687.2,458.6 v16 M1693,458.6 l-0.8,16"/></g></svg>
<span class="t" style="left:391.51px;top:447.65px;font-size:36.8px;line-height:36.8px;color:#000;font-weight:bold;">Ingresos Ganancia Ocasional</span>
<span class="t" style="left:1297.60px;top:450.51px;font-size:24.2px;line-height:24.2px;color:#0a6b1f;font-weight:bold;transform:scaleX(1.1667);-webkit-text-stroke:0.45px #0a6b1f;">Menú</span>
<span class="t" style="left:1511.70px;top:437.72px;font-size:19px;line-height:19px;color:#0a6b1f;font-weight:bold;transform:scaleX(1.0437);-webkit-text-stroke:0.45px #0a6b1f;">Formulario</span>
<span class="t" style="left:1533.02px;top:464.11px;font-size:24.2px;line-height:24.2px;color:#0a6b1f;font-weight:bold;transform:scaleX(1.1223);-webkit-text-stroke:0.45px #0a6b1f;">2593</span>
<span class="t" style="left:1736.51px;top:438.40px;font-size:21.5px;line-height:21.5px;color:#0a6b1f;font-weight:bold;transform:scaleX(1.0807);-webkit-text-stroke:0.45px #0a6b1f;">Limpiar</span>
<span class="t" style="left:1742.17px;top:463.00px;font-size:21.5px;line-height:21.5px;color:#0a6b1f;font-weight:bold;transform:scaleX(1.0656);-webkit-text-stroke:0.45px #0a6b1f;">Anexo</span>
<div class="a" style="left:2061.00px;top:400.00px;width:23.00px;height:708.00px;background:#e6e6e6;"></div>
<div class="a" style="left:2065.50px;top:401.50px;width:18.10px;height:17.50px;background:#fff;border:1px solid #ababab;"></div>
<div class="a" style="left:2065.50px;top:420.80px;width:18.10px;height:557.20px;background:#fff;border:1px solid #ababab;"></div>
<div class="a" style="left:2065.50px;top:1089.80px;width:18.10px;height:17.60px;background:#fff;border:1px solid #ababab;"></div>
<svg class="a" style="left:0.00px;top:0.00px;" width="2236" height="1309" viewBox="0 0 2236 1309"><path d="M2070.6,412.4 l4,-4 l4,4 z" fill="#777"/><path d="M2070.6,1096.6 l4,4 l4,-4 z" fill="#777"/></svg>
<div class="a" style="left:170.00px;top:1108.00px;width:1914.00px;height:29.50px;background:#e6e6e6;"></div>
<div class="a" style="left:170.00px;top:1107.50px;width:1891.00px;height:1.00px;background:#ababab;"></div>
<div class="a" style="left:170.00px;top:1137.00px;width:1914.00px;height:1.00px;background:#c8c6c4;"></div>
<div class="a" style="left:170.00px;top:1138.00px;width:1914.00px;height:24.00px;background:#f3f2f1;"></div>
<div class="a" style="left:273.00px;top:1110.50px;width:83.80px;height:23.10px;background:#006414;"></div>
<span class="t" style="left:282.37px;top:1110.64px;font-size:17.2px;line-height:17.2px;color:#fff;transform:scaleX(1.0132);">0. Menú</span>
<div class="a" style="left:361.80px;top:1110.50px;width:186.50px;height:23.10px;background:#006414;"></div>
<span class="t" style="left:371.73px;top:1110.64px;font-size:17.2px;line-height:17.2px;color:#fff;transform:scaleX(0.9224);">RECOMENDACIONES</span>
<div class="a" style="left:553.30px;top:1110.50px;width:148.20px;height:23.10px;background:#8fd97f;"></div>
<span class="t" style="left:565.59px;top:1110.64px;font-size:17.2px;line-height:17.2px;color:#12300f;transform:scaleX(0.9664);">1.Datos Iniciales</span>
<div class="a" style="left:707.00px;top:1110.50px;width:200.50px;height:23.10px;background:#8fd97f;"></div>
<span class="t" style="left:721.81px;top:1110.64px;font-size:17.2px;line-height:17.2px;color:#12300f;transform:scaleX(0.9515);">10.Liquidación SIMPLE</span>
<div class="a" style="left:912.50px;top:1110.50px;width:170.00px;height:23.10px;background:#8fd97f;"></div>
<span class="t" style="left:926.27px;top:1110.64px;font-size:17.2px;line-height:17.2px;color:#12300f;transform:scaleX(0.9833);">11.Liquidación ICA</span>
<div class="a" style="left:1087.50px;top:1110.50px;width:224.50px;height:23.10px;background:#006414;"></div>
<span class="t" style="left:1100.95px;top:1110.64px;font-size:17.2px;line-height:17.2px;color:#fff;transform:scaleX(0.9747);">2.Actividades Económicas</span>
<div class="a" style="left:1317.00px;top:1110.50px;width:88.00px;height:23.10px;background:#8fd97f;"></div>
<span class="t" style="left:1328.90px;top:1110.64px;font-size:17.2px;line-height:17.2px;color:#12300f;transform:scaleX(0.9569);">3.Tarifas</span>
<div class="a" style="left:1488.80px;top:1110.50px;width:111.20px;height:23.10px;background:#8fd97f;"></div>
<span class="t" style="left:1498.60px;top:1110.64px;font-size:17.2px;line-height:17.2px;color:#12300f;transform:scaleX(0.9383);">5.INCRNGO</span>
<div class="a" style="left:1605.50px;top:1110.50px;width:124.10px;height:23.10px;background:#006414;"></div>
<span class="t" style="left:1616.16px;top:1110.64px;font-size:17.2px;line-height:17.2px;color:#fff;transform:scaleX(0.9639);">6.Descuentos</span>
<div class="a" style="left:1735.20px;top:1110.50px;width:97.80px;height:23.10px;background:#8fd97f;overflow:hidden;"><span class="t" style="left:10.87px;top:0.14px;font-size:17.2px;line-height:17.2px;color:#12300f;transform:scaleX(0.9493);">7.Retenciones</span></div>
<div class="a" style="left:269.50px;top:1112.50px;width:1.30px;height:20.00px;background:#b8b8b8;"></div>
<div class="a" style="left:358.80px;top:1112.50px;width:1.30px;height:20.00px;background:#b8b8b8;"></div>
<div class="a" style="left:550.30px;top:1112.50px;width:1.30px;height:20.00px;background:#b8b8b8;"></div>
<div class="a" style="left:704.00px;top:1112.50px;width:1.30px;height:20.00px;background:#b8b8b8;"></div>
<div class="a" style="left:909.50px;top:1112.50px;width:1.30px;height:20.00px;background:#b8b8b8;"></div>
<div class="a" style="left:1084.50px;top:1112.50px;width:1.30px;height:20.00px;background:#b8b8b8;"></div>
<div class="a" style="left:1314.00px;top:1112.50px;width:1.30px;height:20.00px;background:#b8b8b8;"></div>
<div class="a" style="left:1602.00px;top:1112.50px;width:1.30px;height:20.00px;background:#b8b8b8;"></div>
<div class="a" style="left:1731.80px;top:1112.50px;width:1.30px;height:20.00px;background:#b8b8b8;"></div>
<div class="a" style="left:1407.00px;top:1108.00px;width:79.30px;height:25.80px;background:linear-gradient(#ffffff 0%,#fbfdfb 35%,#c9dfd0 70%,#8fbf9f 100%);border-left:1px solid #c6c6c6;border-right:1px solid #c6c6c6;border-bottom:2px solid #217346;"></div>
<span class="t" style="left:1418.55px;top:1110.64px;font-size:17.2px;line-height:17.2px;color:#217346;font-weight:bold;">4. G.O.</span>
<span class="t" style="left:1839.36px;top:1110.64px;font-size:17.2px;line-height:17.2px;color:#1b5e20;transform:scaleX(1.0933);">...</span>
<div class="a" style="left:1922.40px;top:1113.50px;width:17.60px;height:18.50px;background:#fff;border:1px solid #ababab;"></div>
<div class="a" style="left:1941.50px;top:1113.50px;width:97.10px;height:18.50px;background:#fff;border:1px solid #ababab;"></div>
<div class="a" style="left:2040.30px;top:1113.50px;width:18.40px;height:18.50px;background:#fff;border:1px solid #ababab;"></div>
<span class="t" style="left:174.97px;top:1146.13px;font-size:12.6px;line-height:12.6px;color:#444;transform:scaleX(1.0348);">Listo</span>
<div class="a" style="left:1715.20px;top:1138.00px;width:49.80px;height:24.00px;background:#d0cecd;"></div>
<span class="t" style="left:2045.14px;top:1145.90px;font-size:12.4px;line-height:12.4px;color:#555;transform:scaleX(0.9877);">100%</span>
<svg class="a" style="left:0.00px;top:0.00px;" width="2236" height="1309" viewBox="0 0 2236 1309"><path d="M200,1117.6 v9.8 l-5.4,-4.9 z" fill="#c3c3c3"/><path d="M223.8,1117.6 v9.8 l5.4,-4.9 z" fill="#217346"/><circle cx="1876" cy="1123" r="9.4" fill="none" stroke="#8a8a8a" stroke-width="1.2"/><path d="M1871,1123 h10 M1876,1118 v10" stroke="#777" stroke-width="1.4"/><rect x="1904.4" y="1116.8" width="2.2" height="2.2" fill="#a6a6a6"/><rect x="1904.4" y="1121.8" width="2.2" height="2.2" fill="#a6a6a6"/><rect x="1904.4" y="1126.8" width="2.2" height="2.2" fill="#a6a6a6"/><path d="M1933.4,1118.6 v8.4 l-4.6,-4.2 z" fill="#666"/><path d="M2047.4,1118.6 v8.4 l4.6,-4.200 z" fill="#666"/><g fill="none" stroke="#666" stroke-width="1.2"><path d="M236.6,1158.6 h-7.800 v-15 h16.600 v5"/><path d="M228.8,1146.6 h16.6"/><path d="M231.2,1150 h4 M231.2,1153 h3 M231.2,1156 h3" stroke-width="1"/></g><circle cx="241" cy="1154.400" r="4.4" fill="#f3f2f1" stroke="#666" stroke-width="1.2"/><circle cx="241" cy="1154.400" r="1.9" fill="#666"/><g fill="#e9e8e7" stroke="#595959" stroke-width="1.6"><rect x="1731.9" y="1142.9" width="15" height="14.8"/><path d="M1731.9,1147.9 h15 M1731.9,1152.8 h15 M1736.9,1142.9 v14.8 M1741.9,1142.9 v14.8" fill="none"/></g><g fill="#fff" stroke="#595959" stroke-width="1.5"><rect x="1782" y="1142.9" width="16" height="14.8"/><rect x="1785.9" y="1145.7" width="8.200" height="9.400" fill="#d8d7d6" stroke-width="1.3"/><path d="M1787.600,1148.600 h4.800 M1787.600,1150.500 h4.800 M1787.600,1152.400 h4.800" stroke-width="0.8"/></g><g fill="#fff" stroke="#595959" stroke-width="1.5"><rect x="1831.9" y="1142.9" width="16.200" height="14.8"/><path d="M1836.5,1142.9 v8.700 M1841.700,1142.900 v8.700 H1831.900" fill="none"/></g><path d="M1872,1150.700 h9.600" stroke="#555" stroke-width="1.2"/><path d="M1888.200,1150.700 h124.500" stroke="#a6a6a6" stroke-width="1"/><rect x="1948" y="1144" width="6" height="13.800" fill="#777"/><path d="M2019,1150.700 h9.600 M2023.800,1145.900 v9.600" stroke="#555" stroke-width="1.2"/></svg>
</body></html>
